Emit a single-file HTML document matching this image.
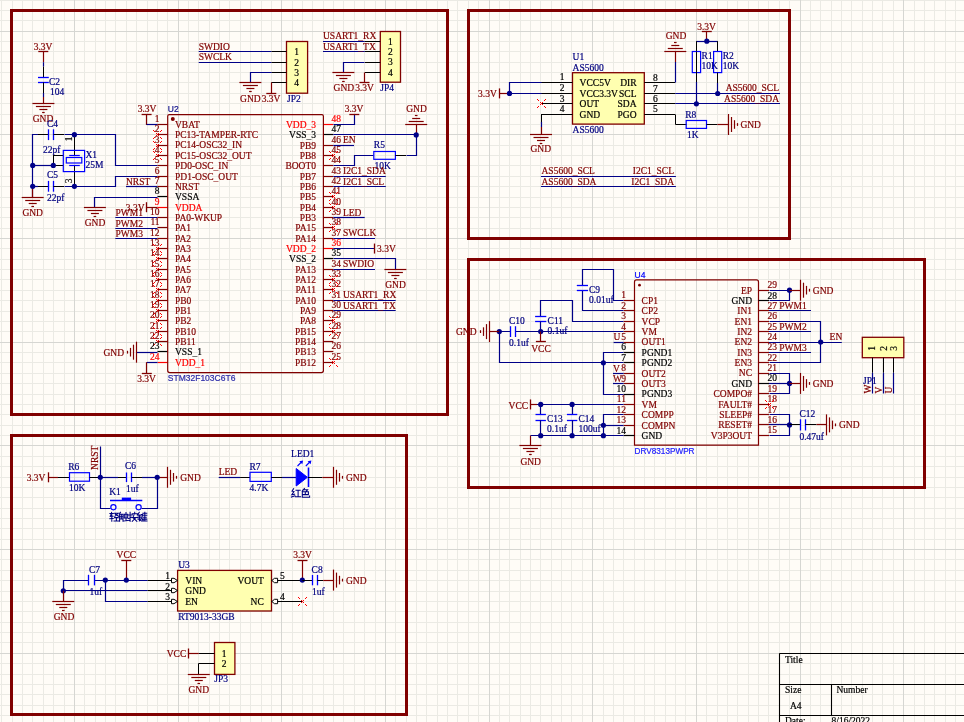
<!DOCTYPE html>
<html><head><meta charset="utf-8"><style>html,body{margin:0;padding:0;background:#fffcf7;overflow:hidden}svg{display:block;will-change:transform}text{white-space:pre}</style></head>
<body><svg width="964" height="722" viewBox="0 0 964 722">
<rect x="0" y="0" width="964" height="722" fill="#fffcf7"/>
<path d="M1.5,0V722M12.5,0V722M22.5,0V722M32.5,0V722M43.5,0V722M53.5,0V722M64.5,0V722M84.5,0V722M95.5,0V722M105.5,0V722M115.5,0V722M126.5,0V722M136.5,0V722M147.5,0V722M157.5,0V722M167.5,0V722M188.5,0V722M198.5,0V722M209.5,0V722M219.5,0V722M229.5,0V722M240.5,0V722M250.5,0V722M261.5,0V722M271.5,0V722M292.5,0V722M302.5,0V722M312.5,0V722M323.5,0V722M333.5,0V722M343.5,0V722M354.5,0V722M364.5,0V722M375.5,0V722M395.5,0V722M406.5,0V722M416.5,0V722M426.5,0V722M437.5,0V722M447.5,0V722M457.5,0V722M468.5,0V722M478.5,0V722M499.5,0V722M509.5,0V722M520.5,0V722M530.5,0V722M540.5,0V722M551.5,0V722M561.5,0V722M571.5,0V722M582.5,0V722M603.5,0V722M613.5,0V722M623.5,0V722M634.5,0V722M644.5,0V722M654.5,0V722M665.5,0V722M675.5,0V722M685.5,0V722M706.5,0V722M717.5,0V722M727.5,0V722M737.5,0V722M748.5,0V722M758.5,0V722M768.5,0V722M779.5,0V722M789.5,0V722M810.5,0V722M820.5,0V722M831.5,0V722M841.5,0V722M851.5,0V722M862.5,0V722M872.5,0V722M882.5,0V722M893.5,0V722M914.5,0V722M924.5,0V722M934.5,0V722M945.5,0V722M955.5,0V722M0,0.5H964M0,10.5H964M0,20.5H964M0,41.5H964M0,51.5H964M0,62.5H964M0,72.5H964M0,82.5H964M0,93.5H964M0,103.5H964M0,114.5H964M0,124.5H964M0,145.5H964M0,155.5H964M0,165.5H964M0,176.5H964M0,186.5H964M0,197.5H964M0,207.5H964M0,217.5H964M0,228.5H964M0,248.5H964M0,259.5H964M0,269.5H964M0,279.5H964M0,290.5H964M0,300.5H964M0,311.5H964M0,321.5H964M0,331.5H964M0,352.5H964M0,362.5H964M0,373.5H964M0,383.5H964M0,394.5H964M0,404.5H964M0,414.5H964M0,425.5H964M0,435.5H964M0,456.5H964M0,466.5H964M0,477.5H964M0,487.5H964M0,497.5H964M0,508.5H964M0,518.5H964M0,528.5H964M0,539.5H964M0,559.5H964M0,570.5H964M0,580.5H964M0,591.5H964M0,601.5H964M0,611.5H964M0,622.5H964M0,632.5H964M0,642.5H964M0,663.5H964M0,674.5H964M0,684.5H964M0,694.5H964M0,705.5H964M0,715.5H964" stroke="#ebeae4" stroke-width="1" fill="none"/>
<path d="M74.5,0V722M178.5,0V722M281.5,0V722M385.5,0V722M489.5,0V722M592.5,0V722M696.5,0V722M800.5,0V722M903.5,0V722M0,31.5H964M0,134.5H964M0,238.5H964M0,342.5H964M0,445.5H964M0,549.5H964M0,653.5H964" stroke="#d6d6d2" stroke-width="1" fill="none"/>
<rect x="11.5" y="10.5" width="436.0" height="404.0" fill="none" stroke="#800000" stroke-width="3"/>
<rect x="468.5" y="10.5" width="321.0" height="228.0" fill="none" stroke="#800000" stroke-width="3"/>
<rect x="11.5" y="435.5" width="395.0" height="279.0" fill="none" stroke="#800000" stroke-width="3"/>
<rect x="468.5" y="259.5" width="456.0" height="228.0" fill="none" stroke="#800000" stroke-width="3"/>
<line x1="38.3" y1="51.5" x2="48.3" y2="51.5" stroke="#800000" stroke-width="1.3"/>
<text x="43" y="50.2" fill="#800000" font-family="'Liberation Serif'" font-size="9.5" text-anchor="middle" stroke="#800000" stroke-width="0.2">3.3V</text>
<line x1="43.5" y1="51.8" x2="43.5" y2="62.2" stroke="#800000" stroke-width="1.2"/>
<line x1="43.5" y1="62.2" x2="43.5" y2="66.6" stroke="#000088" stroke-width="1.2"/>
<line x1="43.5" y1="66.6" x2="43.5" y2="77.3" stroke="#000000" stroke-width="1"/>
<line x1="38" y1="77.5" x2="48.8" y2="77.5" stroke="#0000ff" stroke-width="1.3"/>
<line x1="38" y1="82.5" x2="48.8" y2="82.5" stroke="#0000ff" stroke-width="1.3"/>
<line x1="43.5" y1="82.4" x2="43.5" y2="93" stroke="#000000" stroke-width="1"/>
<line x1="43.5" y1="93" x2="43.5" y2="97" stroke="#000088" stroke-width="1.2"/>
<line x1="43.5" y1="97" x2="43.5" y2="103.5" stroke="#800000" stroke-width="1.2"/>
<text x="49" y="84.8" fill="#000080" font-family="'Liberation Serif'" font-size="9.5" text-anchor="start" stroke="#000080" stroke-width="0.2">C2</text>
<text x="50" y="94.6" fill="#000080" font-family="'Liberation Serif'" font-size="9.5" text-anchor="start" stroke="#000080" stroke-width="0.2">104</text>
<line x1="32.4" y1="103.5" x2="54.4" y2="103.5" stroke="#800000" stroke-width="1.2"/>
<line x1="35.9" y1="106.5" x2="50.9" y2="106.5" stroke="#800000" stroke-width="1.2"/>
<line x1="39.4" y1="109.5" x2="47.4" y2="109.5" stroke="#800000" stroke-width="1.2"/>
<line x1="42.1" y1="112.5" x2="44.7" y2="112.5" stroke="#800000" stroke-width="1.2"/>
<text x="43" y="122" fill="#800000" font-family="'Liberation Serif'" font-size="9.5" text-anchor="middle" stroke="#800000" stroke-width="0.2">GND</text>
<polyline points="32.5,197.5 32.5,134.5 38.5,134.5" fill="none" stroke="#000088" stroke-width="1.2" stroke-linejoin="miter"/>
<line x1="38" y1="134.5" x2="48.5" y2="134.5" stroke="#000000" stroke-width="1"/>
<line x1="48.5" y1="129.3" x2="48.5" y2="140.1" stroke="#0000ff" stroke-width="1.3"/>
<line x1="53.5" y1="129.3" x2="53.5" y2="140.1" stroke="#0000ff" stroke-width="1.3"/>
<line x1="53.5" y1="134.5" x2="64" y2="134.5" stroke="#000000" stroke-width="1"/>
<polyline points="64.5,134.5 115.5,134.5 115.5,165.5 157.5,165.5" fill="none" stroke="#000088" stroke-width="1.2" stroke-linejoin="miter"/>
<text x="47" y="126.5" fill="#000080" font-family="'Liberation Serif'" font-size="9.5" text-anchor="start" stroke="#000080" stroke-width="0.2">C4</text>
<text x="43" y="153" fill="#000080" font-family="'Liberation Serif'" font-size="9.5" text-anchor="start" stroke="#000080" stroke-width="0.2">22pf</text>
<line x1="32.7" y1="186.5" x2="38" y2="186.5" stroke="#000088" stroke-width="1.2"/>
<line x1="38" y1="186.5" x2="48.6" y2="186.5" stroke="#000000" stroke-width="1"/>
<line x1="48.5" y1="180.9" x2="48.5" y2="191.7" stroke="#0000ff" stroke-width="1.3"/>
<line x1="53.5" y1="180.9" x2="53.5" y2="191.7" stroke="#0000ff" stroke-width="1.3"/>
<line x1="53.4" y1="186.5" x2="64" y2="186.5" stroke="#000000" stroke-width="1"/>
<polyline points="64.5,186.5 115.5,186.5 115.5,176.5 157.5,176.5" fill="none" stroke="#000088" stroke-width="1.2" stroke-linejoin="miter"/>
<text x="47" y="177.7" fill="#000080" font-family="'Liberation Serif'" font-size="9.5" text-anchor="start" stroke="#000080" stroke-width="0.2">C5</text>
<text x="47" y="201" fill="#000080" font-family="'Liberation Serif'" font-size="9.5" text-anchor="start" stroke="#000080" stroke-width="0.2">22pf</text>
<line x1="32.5" y1="186.3" x2="32.5" y2="197.5" stroke="#800000" stroke-width="1.2"/>
<line x1="21.7" y1="197.5" x2="43.7" y2="197.5" stroke="#800000" stroke-width="1.2"/>
<line x1="25.2" y1="200.5" x2="40.2" y2="200.5" stroke="#800000" stroke-width="1.2"/>
<line x1="28.7" y1="203.5" x2="36.7" y2="203.5" stroke="#800000" stroke-width="1.2"/>
<line x1="31.4" y1="206.5" x2="34" y2="206.5" stroke="#800000" stroke-width="1.2"/>
<text x="32.7" y="215.5" fill="#800000" font-family="'Liberation Serif'" font-size="9.5" text-anchor="middle" stroke="#800000" stroke-width="0.2">GND</text>
<line x1="32.7" y1="165.5" x2="53.3" y2="165.5" stroke="#000088" stroke-width="1.2"/>
<line x1="53.3" y1="165.5" x2="63.3" y2="165.5" stroke="#000000" stroke-width="1"/>
<line x1="53.5" y1="165.4" x2="53.5" y2="155" stroke="#000000" stroke-width="1"/>
<line x1="53.3" y1="155.5" x2="63.3" y2="155.5" stroke="#000000" stroke-width="1"/>
<line x1="74.5" y1="134.7" x2="74.5" y2="155" stroke="#000000" stroke-width="1"/>
<line x1="74.5" y1="165.3" x2="74.5" y2="186.3" stroke="#000000" stroke-width="1"/>
<rect x="63.3" y="150.4" width="21.3" height="21.2" stroke="#0000ff" stroke-width="1.2" fill="none" rx="0"/>
<rect x="66.3" y="157.5" width="15.5" height="5.5" stroke="#0000ff" stroke-width="1.2" fill="none" rx="0"/>
<line x1="69.2" y1="155.5" x2="79.8" y2="155.5" stroke="#0000ff" stroke-width="1.2"/>
<line x1="69.2" y1="165.5" x2="79.8" y2="165.5" stroke="#0000ff" stroke-width="1.2"/>
<text x="72.5" y="141.3" fill="#000000" font-family="'Liberation Serif'" font-size="9.5" text-anchor="start" stroke="#000000" stroke-width="0.2" transform="rotate(-90 72.5 141.3)">1</text>
<text x="72.5" y="183.3" fill="#000000" font-family="'Liberation Serif'" font-size="9.5" text-anchor="start" stroke="#000000" stroke-width="0.2" transform="rotate(-90 72.5 183.3)">3</text>
<text x="85.4" y="157.8" fill="#000080" font-family="'Liberation Serif'" font-size="9.5" text-anchor="start" stroke="#000080" stroke-width="0.2">X1</text>
<text x="85.4" y="167.8" fill="#000080" font-family="'Liberation Serif'" font-size="9.5" text-anchor="start" stroke="#000080" stroke-width="0.2">25M</text>
<circle cx="74.4" cy="134.7" r="2.6" fill="#000088"/>
<circle cx="32.7" cy="165.4" r="2.6" fill="#000088"/>
<circle cx="53.3" cy="165.4" r="2.6" fill="#000088"/>
<circle cx="32.7" cy="186.3" r="2.6" fill="#000088"/>
<circle cx="74.4" cy="186.3" r="2.6" fill="#000088"/>
<line x1="126" y1="186.5" x2="157.5" y2="186.5" stroke="#000088" stroke-width="1.2"/>
<text x="126" y="184.8" fill="#800000" font-family="'Liberation Serif'" font-size="9.5" text-anchor="start" stroke="#800000" stroke-width="0.2">NRST</text>
<polyline points="157.5,197.5 94.5,197.5 94.5,207.5" fill="none" stroke="#000088" stroke-width="1.2" stroke-linejoin="miter"/>
<line x1="83.9" y1="207.5" x2="105.9" y2="207.5" stroke="#800000" stroke-width="1.2"/>
<line x1="87.4" y1="210.5" x2="102.4" y2="210.5" stroke="#800000" stroke-width="1.2"/>
<line x1="90.9" y1="213.5" x2="98.9" y2="213.5" stroke="#800000" stroke-width="1.2"/>
<line x1="93.6" y1="216.5" x2="96.2" y2="216.5" stroke="#800000" stroke-width="1.2"/>
<text x="95" y="225.5" fill="#800000" font-family="'Liberation Serif'" font-size="9.5" text-anchor="middle" stroke="#800000" stroke-width="0.2">GND</text>
<line x1="146.7" y1="207.5" x2="157.5" y2="207.5" stroke="#800000" stroke-width="1.2"/>
<line x1="146.5" y1="202.2" x2="146.5" y2="212.2" stroke="#800000" stroke-width="1.3"/>
<text x="144.5" y="210.5" fill="#800000" font-family="'Liberation Serif'" font-size="9.5" text-anchor="end" stroke="#800000" stroke-width="0.2">3.3V</text>
<line x1="115.3" y1="217.5" x2="157.5" y2="217.5" stroke="#000088" stroke-width="1.2"/>
<text x="115.5" y="216.1" fill="#800000" font-family="'Liberation Serif'" font-size="9.5" text-anchor="start" stroke="#800000" stroke-width="0.2">PWM1</text>
<line x1="115.3" y1="228.5" x2="157.5" y2="228.5" stroke="#000088" stroke-width="1.2"/>
<text x="115.5" y="226.8" fill="#800000" font-family="'Liberation Serif'" font-size="9.5" text-anchor="start" stroke="#800000" stroke-width="0.2">PWM2</text>
<line x1="115.3" y1="238.5" x2="157.5" y2="238.5" stroke="#000088" stroke-width="1.2"/>
<text x="115.5" y="237.1" fill="#800000" font-family="'Liberation Serif'" font-size="9.5" text-anchor="start" stroke="#800000" stroke-width="0.2">PWM3</text>
<line x1="141.6" y1="114.5" x2="151.6" y2="114.5" stroke="#800000" stroke-width="1.3"/>
<text x="147" y="111.8" fill="#800000" font-family="'Liberation Serif'" font-size="9.5" text-anchor="middle" stroke="#800000" stroke-width="0.2">3.3V</text>
<polyline points="146.5,114.5 146.5,124.5 157.5,124.5" fill="none" stroke="#800000" stroke-width="1.2" stroke-linejoin="miter"/>
<line x1="146.6" y1="124.5" x2="157.5" y2="124.5" stroke="#000088" stroke-width="1.2"/>
<line x1="157.5" y1="124.5" x2="167.7" y2="124.5" stroke="#800000" stroke-width="1.2"/>
<text x="175" y="127.8" fill="#800000" font-family="'Liberation Serif'" font-size="9.5" text-anchor="start" stroke="#800000" stroke-width="0.2">VBAT</text>
<text x="159.6" y="121.9" fill="#800000" font-family="'Liberation Serif'" font-size="9.5" text-anchor="end" stroke="#800000" stroke-width="0.2">1</text>
<line x1="157.5" y1="134.5" x2="167.7" y2="134.5" stroke="#800000" stroke-width="1.2"/>
<text x="175" y="138.14" fill="#800000" font-family="'Liberation Serif'" font-size="9.5" text-anchor="start" stroke="#800000" stroke-width="0.2">PC13-TAMPER-RTC</text>
<text x="159.6" y="132.24" fill="#800000" font-family="'Liberation Serif'" font-size="9.5" text-anchor="end" stroke="#800000" stroke-width="0.2">2</text>
<path d="M153,130h1v1h-1zM154,131h1v1h-1zM161,130h1v1h-1zM160,131h1v1h-1zM153,138h1v1h-1zM154,137h1v1h-1zM161,138h1v1h-1zM160,137h1v1h-1zM156,133h1v1h-1zM157,134h1v1h-1zM158,135h1v1h-1zM156,135h1v1h-1zM158,133h1v1h-1z" fill="#ff0000" shape-rendering="crispEdges"/>
<line x1="157.5" y1="145.5" x2="167.7" y2="145.5" stroke="#800000" stroke-width="1.2"/>
<text x="175" y="148.49" fill="#800000" font-family="'Liberation Serif'" font-size="9.5" text-anchor="start" stroke="#800000" stroke-width="0.2">PC14-OSC32_IN</text>
<text x="159.6" y="142.59" fill="#800000" font-family="'Liberation Serif'" font-size="9.5" text-anchor="end" stroke="#800000" stroke-width="0.2">3</text>
<path d="M153,141h1v1h-1zM154,142h1v1h-1zM161,141h1v1h-1zM160,142h1v1h-1zM153,149h1v1h-1zM154,148h1v1h-1zM161,149h1v1h-1zM160,148h1v1h-1zM156,144h1v1h-1zM157,145h1v1h-1zM158,146h1v1h-1zM156,146h1v1h-1zM158,144h1v1h-1z" fill="#ff0000" shape-rendering="crispEdges"/>
<line x1="157.5" y1="155.5" x2="167.7" y2="155.5" stroke="#800000" stroke-width="1.2"/>
<text x="175" y="158.83" fill="#800000" font-family="'Liberation Serif'" font-size="9.5" text-anchor="start" stroke="#800000" stroke-width="0.2">PC15-OSC32_OUT</text>
<text x="159.6" y="152.93" fill="#800000" font-family="'Liberation Serif'" font-size="9.5" text-anchor="end" stroke="#800000" stroke-width="0.2">4</text>
<path d="M153,151h1v1h-1zM154,152h1v1h-1zM161,151h1v1h-1zM160,152h1v1h-1zM153,159h1v1h-1zM154,158h1v1h-1zM161,159h1v1h-1zM160,158h1v1h-1zM156,154h1v1h-1zM157,155h1v1h-1zM158,156h1v1h-1zM156,156h1v1h-1zM158,154h1v1h-1z" fill="#ff0000" shape-rendering="crispEdges"/>
<line x1="157.5" y1="165.5" x2="167.7" y2="165.5" stroke="#800000" stroke-width="1.2"/>
<text x="175" y="169.17" fill="#800000" font-family="'Liberation Serif'" font-size="9.5" text-anchor="start" stroke="#800000" stroke-width="0.2">PD0-OSC_IN</text>
<text x="159.6" y="163.27" fill="#800000" font-family="'Liberation Serif'" font-size="9.5" text-anchor="end" stroke="#800000" stroke-width="0.2">5</text>
<line x1="157.5" y1="176.5" x2="167.7" y2="176.5" stroke="#800000" stroke-width="1.2"/>
<text x="175" y="179.52" fill="#800000" font-family="'Liberation Serif'" font-size="9.5" text-anchor="start" stroke="#800000" stroke-width="0.2">PD1-OSC_OUT</text>
<text x="159.6" y="173.62" fill="#800000" font-family="'Liberation Serif'" font-size="9.5" text-anchor="end" stroke="#800000" stroke-width="0.2">6</text>
<line x1="157.5" y1="186.5" x2="167.7" y2="186.5" stroke="#800000" stroke-width="1.2"/>
<text x="175" y="189.86" fill="#800000" font-family="'Liberation Serif'" font-size="9.5" text-anchor="start" stroke="#800000" stroke-width="0.2">NRST</text>
<text x="159.6" y="183.96" fill="#800000" font-family="'Liberation Serif'" font-size="9.5" text-anchor="end" stroke="#800000" stroke-width="0.2">7</text>
<line x1="157.5" y1="196.5" x2="167.7" y2="196.5" stroke="#000000" stroke-width="1.2"/>
<text x="175" y="200.2" fill="#000000" font-family="'Liberation Serif'" font-size="9.5" text-anchor="start" stroke="#000000" stroke-width="0.2">VSSA</text>
<text x="159.6" y="194.3" fill="#000000" font-family="'Liberation Serif'" font-size="9.5" text-anchor="end" stroke="#000000" stroke-width="0.2">8</text>
<line x1="157.5" y1="207.5" x2="167.7" y2="207.5" stroke="#ff0000" stroke-width="1.2"/>
<text x="175" y="210.54" fill="#ff0000" font-family="'Liberation Serif'" font-size="9.5" text-anchor="start" stroke="#ff0000" stroke-width="0.2">VDDA</text>
<text x="159.6" y="204.64" fill="#ff0000" font-family="'Liberation Serif'" font-size="9.5" text-anchor="end" stroke="#ff0000" stroke-width="0.2">9</text>
<line x1="157.5" y1="217.5" x2="167.7" y2="217.5" stroke="#800000" stroke-width="1.2"/>
<text x="175" y="220.89" fill="#800000" font-family="'Liberation Serif'" font-size="9.5" text-anchor="start" stroke="#800000" stroke-width="0.2">PA0-WKUP</text>
<text x="159.6" y="214.99" fill="#800000" font-family="'Liberation Serif'" font-size="9.5" text-anchor="end" stroke="#800000" stroke-width="0.2">10</text>
<line x1="157.5" y1="227.5" x2="167.7" y2="227.5" stroke="#800000" stroke-width="1.2"/>
<text x="175" y="231.23" fill="#800000" font-family="'Liberation Serif'" font-size="9.5" text-anchor="start" stroke="#800000" stroke-width="0.2">PA1</text>
<text x="159.6" y="225.33" fill="#800000" font-family="'Liberation Serif'" font-size="9.5" text-anchor="end" stroke="#800000" stroke-width="0.2">11</text>
<line x1="157.5" y1="238.5" x2="167.7" y2="238.5" stroke="#800000" stroke-width="1.2"/>
<text x="175" y="241.57" fill="#800000" font-family="'Liberation Serif'" font-size="9.5" text-anchor="start" stroke="#800000" stroke-width="0.2">PA2</text>
<text x="159.6" y="235.67" fill="#800000" font-family="'Liberation Serif'" font-size="9.5" text-anchor="end" stroke="#800000" stroke-width="0.2">12</text>
<line x1="157.5" y1="248.5" x2="167.7" y2="248.5" stroke="#800000" stroke-width="1.2"/>
<text x="175" y="251.92" fill="#800000" font-family="'Liberation Serif'" font-size="9.5" text-anchor="start" stroke="#800000" stroke-width="0.2">PA3</text>
<text x="159.6" y="246.02" fill="#800000" font-family="'Liberation Serif'" font-size="9.5" text-anchor="end" stroke="#800000" stroke-width="0.2">13</text>
<path d="M153,244h1v1h-1zM154,245h1v1h-1zM161,244h1v1h-1zM160,245h1v1h-1zM153,252h1v1h-1zM154,251h1v1h-1zM161,252h1v1h-1zM160,251h1v1h-1zM156,247h1v1h-1zM157,248h1v1h-1zM158,249h1v1h-1zM156,249h1v1h-1zM158,247h1v1h-1z" fill="#ff0000" shape-rendering="crispEdges"/>
<line x1="157.5" y1="258.5" x2="167.7" y2="258.5" stroke="#800000" stroke-width="1.2"/>
<text x="175" y="262.26" fill="#800000" font-family="'Liberation Serif'" font-size="9.5" text-anchor="start" stroke="#800000" stroke-width="0.2">PA4</text>
<text x="159.6" y="256.36" fill="#800000" font-family="'Liberation Serif'" font-size="9.5" text-anchor="end" stroke="#800000" stroke-width="0.2">14</text>
<path d="M153,254h1v1h-1zM154,255h1v1h-1zM161,254h1v1h-1zM160,255h1v1h-1zM153,262h1v1h-1zM154,261h1v1h-1zM161,262h1v1h-1zM160,261h1v1h-1zM156,257h1v1h-1zM157,258h1v1h-1zM158,259h1v1h-1zM156,259h1v1h-1zM158,257h1v1h-1z" fill="#ff0000" shape-rendering="crispEdges"/>
<line x1="157.5" y1="269.5" x2="167.7" y2="269.5" stroke="#800000" stroke-width="1.2"/>
<text x="175" y="272.6" fill="#800000" font-family="'Liberation Serif'" font-size="9.5" text-anchor="start" stroke="#800000" stroke-width="0.2">PA5</text>
<text x="159.6" y="266.7" fill="#800000" font-family="'Liberation Serif'" font-size="9.5" text-anchor="end" stroke="#800000" stroke-width="0.2">15</text>
<path d="M153,265h1v1h-1zM154,266h1v1h-1zM161,265h1v1h-1zM160,266h1v1h-1zM153,273h1v1h-1zM154,272h1v1h-1zM161,273h1v1h-1zM160,272h1v1h-1zM156,268h1v1h-1zM157,269h1v1h-1zM158,270h1v1h-1zM156,270h1v1h-1zM158,268h1v1h-1z" fill="#ff0000" shape-rendering="crispEdges"/>
<line x1="157.5" y1="279.5" x2="167.7" y2="279.5" stroke="#800000" stroke-width="1.2"/>
<text x="175" y="282.94" fill="#800000" font-family="'Liberation Serif'" font-size="9.5" text-anchor="start" stroke="#800000" stroke-width="0.2">PA6</text>
<text x="159.6" y="277.05" fill="#800000" font-family="'Liberation Serif'" font-size="9.5" text-anchor="end" stroke="#800000" stroke-width="0.2">16</text>
<path d="M153,275h1v1h-1zM154,276h1v1h-1zM161,275h1v1h-1zM160,276h1v1h-1zM153,283h1v1h-1zM154,282h1v1h-1zM161,283h1v1h-1zM160,282h1v1h-1zM156,278h1v1h-1zM157,279h1v1h-1zM158,280h1v1h-1zM156,280h1v1h-1zM158,278h1v1h-1z" fill="#ff0000" shape-rendering="crispEdges"/>
<line x1="157.5" y1="289.5" x2="167.7" y2="289.5" stroke="#800000" stroke-width="1.2"/>
<text x="175" y="293.29" fill="#800000" font-family="'Liberation Serif'" font-size="9.5" text-anchor="start" stroke="#800000" stroke-width="0.2">PA7</text>
<text x="159.6" y="287.39" fill="#800000" font-family="'Liberation Serif'" font-size="9.5" text-anchor="end" stroke="#800000" stroke-width="0.2">17</text>
<path d="M153,285h1v1h-1zM154,286h1v1h-1zM161,285h1v1h-1zM160,286h1v1h-1zM153,293h1v1h-1zM154,292h1v1h-1zM161,293h1v1h-1zM160,292h1v1h-1zM156,288h1v1h-1zM157,289h1v1h-1zM158,290h1v1h-1zM156,290h1v1h-1zM158,288h1v1h-1z" fill="#ff0000" shape-rendering="crispEdges"/>
<line x1="157.5" y1="300.5" x2="167.7" y2="300.5" stroke="#800000" stroke-width="1.2"/>
<text x="175" y="303.63" fill="#800000" font-family="'Liberation Serif'" font-size="9.5" text-anchor="start" stroke="#800000" stroke-width="0.2">PB0</text>
<text x="159.6" y="297.73" fill="#800000" font-family="'Liberation Serif'" font-size="9.5" text-anchor="end" stroke="#800000" stroke-width="0.2">18</text>
<path d="M153,296h1v1h-1zM154,297h1v1h-1zM161,296h1v1h-1zM160,297h1v1h-1zM153,304h1v1h-1zM154,303h1v1h-1zM161,304h1v1h-1zM160,303h1v1h-1zM156,299h1v1h-1zM157,300h1v1h-1zM158,301h1v1h-1zM156,301h1v1h-1zM158,299h1v1h-1z" fill="#ff0000" shape-rendering="crispEdges"/>
<line x1="157.5" y1="310.5" x2="167.7" y2="310.5" stroke="#800000" stroke-width="1.2"/>
<text x="175" y="313.97" fill="#800000" font-family="'Liberation Serif'" font-size="9.5" text-anchor="start" stroke="#800000" stroke-width="0.2">PB1</text>
<text x="159.6" y="308.07" fill="#800000" font-family="'Liberation Serif'" font-size="9.5" text-anchor="end" stroke="#800000" stroke-width="0.2">19</text>
<path d="M153,306h1v1h-1zM154,307h1v1h-1zM161,306h1v1h-1zM160,307h1v1h-1zM153,314h1v1h-1zM154,313h1v1h-1zM161,314h1v1h-1zM160,313h1v1h-1zM156,309h1v1h-1zM157,310h1v1h-1zM158,311h1v1h-1zM156,311h1v1h-1zM158,309h1v1h-1z" fill="#ff0000" shape-rendering="crispEdges"/>
<line x1="157.5" y1="320.5" x2="167.7" y2="320.5" stroke="#800000" stroke-width="1.2"/>
<text x="175" y="324.32" fill="#800000" font-family="'Liberation Serif'" font-size="9.5" text-anchor="start" stroke="#800000" stroke-width="0.2">PB2</text>
<text x="159.6" y="318.42" fill="#800000" font-family="'Liberation Serif'" font-size="9.5" text-anchor="end" stroke="#800000" stroke-width="0.2">20</text>
<path d="M153,316h1v1h-1zM154,317h1v1h-1zM161,316h1v1h-1zM160,317h1v1h-1zM153,324h1v1h-1zM154,323h1v1h-1zM161,324h1v1h-1zM160,323h1v1h-1zM156,319h1v1h-1zM157,320h1v1h-1zM158,321h1v1h-1zM156,321h1v1h-1zM158,319h1v1h-1z" fill="#ff0000" shape-rendering="crispEdges"/>
<line x1="157.5" y1="331.5" x2="167.7" y2="331.5" stroke="#800000" stroke-width="1.2"/>
<text x="175" y="334.66" fill="#800000" font-family="'Liberation Serif'" font-size="9.5" text-anchor="start" stroke="#800000" stroke-width="0.2">PB10</text>
<text x="159.6" y="328.76" fill="#800000" font-family="'Liberation Serif'" font-size="9.5" text-anchor="end" stroke="#800000" stroke-width="0.2">21</text>
<path d="M153,327h1v1h-1zM154,328h1v1h-1zM161,327h1v1h-1zM160,328h1v1h-1zM153,335h1v1h-1zM154,334h1v1h-1zM161,335h1v1h-1zM160,334h1v1h-1zM156,330h1v1h-1zM157,331h1v1h-1zM158,332h1v1h-1zM156,332h1v1h-1zM158,330h1v1h-1z" fill="#ff0000" shape-rendering="crispEdges"/>
<line x1="157.5" y1="341.5" x2="167.7" y2="341.5" stroke="#800000" stroke-width="1.2"/>
<text x="175" y="345" fill="#800000" font-family="'Liberation Serif'" font-size="9.5" text-anchor="start" stroke="#800000" stroke-width="0.2">PB11</text>
<text x="159.6" y="339.1" fill="#800000" font-family="'Liberation Serif'" font-size="9.5" text-anchor="end" stroke="#800000" stroke-width="0.2">22</text>
<path d="M153,337h1v1h-1zM154,338h1v1h-1zM161,337h1v1h-1zM160,338h1v1h-1zM153,345h1v1h-1zM154,344h1v1h-1zM161,345h1v1h-1zM160,344h1v1h-1zM156,340h1v1h-1zM157,341h1v1h-1zM158,342h1v1h-1zM156,342h1v1h-1zM158,340h1v1h-1z" fill="#ff0000" shape-rendering="crispEdges"/>
<line x1="157.5" y1="351.5" x2="167.7" y2="351.5" stroke="#000000" stroke-width="1.2"/>
<text x="175" y="355.35" fill="#000000" font-family="'Liberation Serif'" font-size="9.5" text-anchor="start" stroke="#000000" stroke-width="0.2">VSS_1</text>
<text x="159.6" y="349.45" fill="#000000" font-family="'Liberation Serif'" font-size="9.5" text-anchor="end" stroke="#000000" stroke-width="0.2">23</text>
<line x1="157.5" y1="362.5" x2="167.7" y2="362.5" stroke="#ff0000" stroke-width="1.2"/>
<text x="175" y="365.69" fill="#ff0000" font-family="'Liberation Serif'" font-size="9.5" text-anchor="start" stroke="#ff0000" stroke-width="0.2">VDD_1</text>
<text x="159.6" y="359.79" fill="#ff0000" font-family="'Liberation Serif'" font-size="9.5" text-anchor="end" stroke="#ff0000" stroke-width="0.2">24</text>
<line x1="323.4" y1="124.5" x2="333.3" y2="124.5" stroke="#ff0000" stroke-width="1.2"/>
<text x="316" y="128" fill="#ff0000" font-family="'Liberation Serif'" font-size="9.5" text-anchor="end" stroke="#ff0000" stroke-width="0.2">VDD_3</text>
<text x="331.5" y="122.1" fill="#ff0000" font-family="'Liberation Serif'" font-size="9.5" text-anchor="start" stroke="#ff0000" stroke-width="0.2">48</text>
<line x1="323.4" y1="134.5" x2="333.3" y2="134.5" stroke="#000000" stroke-width="1.2"/>
<text x="316" y="138.33" fill="#000000" font-family="'Liberation Serif'" font-size="9.5" text-anchor="end" stroke="#000000" stroke-width="0.2">VSS_3</text>
<text x="331.5" y="132.43" fill="#000000" font-family="'Liberation Serif'" font-size="9.5" text-anchor="start" stroke="#000000" stroke-width="0.2">47</text>
<line x1="323.4" y1="145.5" x2="333.3" y2="145.5" stroke="#800000" stroke-width="1.2"/>
<text x="316" y="148.66" fill="#800000" font-family="'Liberation Serif'" font-size="9.5" text-anchor="end" stroke="#800000" stroke-width="0.2">PB9</text>
<text x="331.5" y="142.76" fill="#800000" font-family="'Liberation Serif'" font-size="9.5" text-anchor="start" stroke="#800000" stroke-width="0.2">46</text>
<line x1="323.4" y1="155.5" x2="333.3" y2="155.5" stroke="#800000" stroke-width="1.2"/>
<text x="316" y="158.99" fill="#800000" font-family="'Liberation Serif'" font-size="9.5" text-anchor="end" stroke="#800000" stroke-width="0.2">PB8</text>
<text x="331.5" y="153.09" fill="#800000" font-family="'Liberation Serif'" font-size="9.5" text-anchor="start" stroke="#800000" stroke-width="0.2">45</text>
<path d="M329,151h1v1h-1zM330,152h1v1h-1zM337,151h1v1h-1zM336,152h1v1h-1zM329,159h1v1h-1zM330,158h1v1h-1zM337,159h1v1h-1zM336,158h1v1h-1zM332,154h1v1h-1zM333,155h1v1h-1zM334,156h1v1h-1zM332,156h1v1h-1zM334,154h1v1h-1z" fill="#ff0000" shape-rendering="crispEdges"/>
<line x1="323.4" y1="165.5" x2="333.3" y2="165.5" stroke="#800000" stroke-width="1.2"/>
<text x="316" y="169.32" fill="#800000" font-family="'Liberation Serif'" font-size="9.5" text-anchor="end" stroke="#800000" stroke-width="0.2">BOOT0</text>
<text x="331.5" y="163.42" fill="#800000" font-family="'Liberation Serif'" font-size="9.5" text-anchor="start" stroke="#800000" stroke-width="0.2">44</text>
<line x1="323.4" y1="176.5" x2="333.3" y2="176.5" stroke="#800000" stroke-width="1.2"/>
<text x="316" y="179.65" fill="#800000" font-family="'Liberation Serif'" font-size="9.5" text-anchor="end" stroke="#800000" stroke-width="0.2">PB7</text>
<text x="331.5" y="173.75" fill="#800000" font-family="'Liberation Serif'" font-size="9.5" text-anchor="start" stroke="#800000" stroke-width="0.2">43</text>
<line x1="323.4" y1="186.5" x2="333.3" y2="186.5" stroke="#800000" stroke-width="1.2"/>
<text x="316" y="189.98" fill="#800000" font-family="'Liberation Serif'" font-size="9.5" text-anchor="end" stroke="#800000" stroke-width="0.2">PB6</text>
<text x="331.5" y="184.08" fill="#800000" font-family="'Liberation Serif'" font-size="9.5" text-anchor="start" stroke="#800000" stroke-width="0.2">42</text>
<line x1="323.4" y1="196.5" x2="333.3" y2="196.5" stroke="#800000" stroke-width="1.2"/>
<text x="316" y="200.31" fill="#800000" font-family="'Liberation Serif'" font-size="9.5" text-anchor="end" stroke="#800000" stroke-width="0.2">PB5</text>
<text x="331.5" y="194.41" fill="#800000" font-family="'Liberation Serif'" font-size="9.5" text-anchor="start" stroke="#800000" stroke-width="0.2">41</text>
<path d="M329,192h1v1h-1zM330,193h1v1h-1zM337,192h1v1h-1zM336,193h1v1h-1zM329,200h1v1h-1zM330,199h1v1h-1zM337,200h1v1h-1zM336,199h1v1h-1zM332,195h1v1h-1zM333,196h1v1h-1zM334,197h1v1h-1zM332,197h1v1h-1zM334,195h1v1h-1z" fill="#ff0000" shape-rendering="crispEdges"/>
<line x1="323.4" y1="207.5" x2="333.3" y2="207.5" stroke="#800000" stroke-width="1.2"/>
<text x="316" y="210.64" fill="#800000" font-family="'Liberation Serif'" font-size="9.5" text-anchor="end" stroke="#800000" stroke-width="0.2">PB4</text>
<text x="331.5" y="204.74" fill="#800000" font-family="'Liberation Serif'" font-size="9.5" text-anchor="start" stroke="#800000" stroke-width="0.2">40</text>
<path d="M329,203h1v1h-1zM330,204h1v1h-1zM337,203h1v1h-1zM336,204h1v1h-1zM329,211h1v1h-1zM330,210h1v1h-1zM337,211h1v1h-1zM336,210h1v1h-1zM332,206h1v1h-1zM333,207h1v1h-1zM334,208h1v1h-1zM332,208h1v1h-1zM334,206h1v1h-1z" fill="#ff0000" shape-rendering="crispEdges"/>
<line x1="323.4" y1="217.5" x2="333.3" y2="217.5" stroke="#800000" stroke-width="1.2"/>
<text x="316" y="220.97" fill="#800000" font-family="'Liberation Serif'" font-size="9.5" text-anchor="end" stroke="#800000" stroke-width="0.2">PB3</text>
<text x="331.5" y="215.07" fill="#800000" font-family="'Liberation Serif'" font-size="9.5" text-anchor="start" stroke="#800000" stroke-width="0.2">39</text>
<line x1="323.4" y1="227.5" x2="333.3" y2="227.5" stroke="#800000" stroke-width="1.2"/>
<text x="316" y="231.3" fill="#800000" font-family="'Liberation Serif'" font-size="9.5" text-anchor="end" stroke="#800000" stroke-width="0.2">PA15</text>
<text x="331.5" y="225.4" fill="#800000" font-family="'Liberation Serif'" font-size="9.5" text-anchor="start" stroke="#800000" stroke-width="0.2">38</text>
<path d="M329,223h1v1h-1zM330,224h1v1h-1zM337,223h1v1h-1zM336,224h1v1h-1zM329,231h1v1h-1zM330,230h1v1h-1zM337,231h1v1h-1zM336,230h1v1h-1zM332,226h1v1h-1zM333,227h1v1h-1zM334,228h1v1h-1zM332,228h1v1h-1zM334,226h1v1h-1z" fill="#ff0000" shape-rendering="crispEdges"/>
<line x1="323.4" y1="238.5" x2="333.3" y2="238.5" stroke="#800000" stroke-width="1.2"/>
<text x="316" y="241.63" fill="#800000" font-family="'Liberation Serif'" font-size="9.5" text-anchor="end" stroke="#800000" stroke-width="0.2">PA14</text>
<text x="331.5" y="235.73" fill="#800000" font-family="'Liberation Serif'" font-size="9.5" text-anchor="start" stroke="#800000" stroke-width="0.2">37</text>
<line x1="323.4" y1="248.5" x2="333.3" y2="248.5" stroke="#ff0000" stroke-width="1.2"/>
<text x="316" y="251.96" fill="#ff0000" font-family="'Liberation Serif'" font-size="9.5" text-anchor="end" stroke="#ff0000" stroke-width="0.2">VDD_2</text>
<text x="331.5" y="246.06" fill="#ff0000" font-family="'Liberation Serif'" font-size="9.5" text-anchor="start" stroke="#ff0000" stroke-width="0.2">36</text>
<line x1="323.4" y1="258.5" x2="333.3" y2="258.5" stroke="#000000" stroke-width="1.2"/>
<text x="316" y="262.29" fill="#000000" font-family="'Liberation Serif'" font-size="9.5" text-anchor="end" stroke="#000000" stroke-width="0.2">VSS_2</text>
<text x="331.5" y="256.39" fill="#000000" font-family="'Liberation Serif'" font-size="9.5" text-anchor="start" stroke="#000000" stroke-width="0.2">35</text>
<line x1="323.4" y1="269.5" x2="333.3" y2="269.5" stroke="#800000" stroke-width="1.2"/>
<text x="316" y="272.62" fill="#800000" font-family="'Liberation Serif'" font-size="9.5" text-anchor="end" stroke="#800000" stroke-width="0.2">PA13</text>
<text x="331.5" y="266.72" fill="#800000" font-family="'Liberation Serif'" font-size="9.5" text-anchor="start" stroke="#800000" stroke-width="0.2">34</text>
<line x1="323.4" y1="279.5" x2="333.3" y2="279.5" stroke="#800000" stroke-width="1.2"/>
<text x="316" y="282.95" fill="#800000" font-family="'Liberation Serif'" font-size="9.5" text-anchor="end" stroke="#800000" stroke-width="0.2">PA12</text>
<text x="331.5" y="277.05" fill="#800000" font-family="'Liberation Serif'" font-size="9.5" text-anchor="start" stroke="#800000" stroke-width="0.2">33</text>
<path d="M329,275h1v1h-1zM330,276h1v1h-1zM337,275h1v1h-1zM336,276h1v1h-1zM329,283h1v1h-1zM330,282h1v1h-1zM337,283h1v1h-1zM336,282h1v1h-1zM332,278h1v1h-1zM333,279h1v1h-1zM334,280h1v1h-1zM332,280h1v1h-1zM334,278h1v1h-1z" fill="#ff0000" shape-rendering="crispEdges"/>
<line x1="323.4" y1="289.5" x2="333.3" y2="289.5" stroke="#800000" stroke-width="1.2"/>
<text x="316" y="293.28" fill="#800000" font-family="'Liberation Serif'" font-size="9.5" text-anchor="end" stroke="#800000" stroke-width="0.2">PA11</text>
<text x="331.5" y="287.38" fill="#800000" font-family="'Liberation Serif'" font-size="9.5" text-anchor="start" stroke="#800000" stroke-width="0.2">32</text>
<path d="M329,285h1v1h-1zM330,286h1v1h-1zM337,285h1v1h-1zM336,286h1v1h-1zM329,293h1v1h-1zM330,292h1v1h-1zM337,293h1v1h-1zM336,292h1v1h-1zM332,288h1v1h-1zM333,289h1v1h-1zM334,290h1v1h-1zM332,290h1v1h-1zM334,288h1v1h-1z" fill="#ff0000" shape-rendering="crispEdges"/>
<line x1="323.4" y1="300.5" x2="333.3" y2="300.5" stroke="#800000" stroke-width="1.2"/>
<text x="316" y="303.61" fill="#800000" font-family="'Liberation Serif'" font-size="9.5" text-anchor="end" stroke="#800000" stroke-width="0.2">PA10</text>
<text x="331.5" y="297.71" fill="#800000" font-family="'Liberation Serif'" font-size="9.5" text-anchor="start" stroke="#800000" stroke-width="0.2">31</text>
<line x1="323.4" y1="310.5" x2="333.3" y2="310.5" stroke="#800000" stroke-width="1.2"/>
<text x="316" y="313.94" fill="#800000" font-family="'Liberation Serif'" font-size="9.5" text-anchor="end" stroke="#800000" stroke-width="0.2">PA9</text>
<text x="331.5" y="308.04" fill="#800000" font-family="'Liberation Serif'" font-size="9.5" text-anchor="start" stroke="#800000" stroke-width="0.2">30</text>
<line x1="323.4" y1="320.5" x2="333.3" y2="320.5" stroke="#800000" stroke-width="1.2"/>
<text x="316" y="324.27" fill="#800000" font-family="'Liberation Serif'" font-size="9.5" text-anchor="end" stroke="#800000" stroke-width="0.2">PA8</text>
<text x="331.5" y="318.37" fill="#800000" font-family="'Liberation Serif'" font-size="9.5" text-anchor="start" stroke="#800000" stroke-width="0.2">29</text>
<path d="M329,316h1v1h-1zM330,317h1v1h-1zM337,316h1v1h-1zM336,317h1v1h-1zM329,324h1v1h-1zM330,323h1v1h-1zM337,324h1v1h-1zM336,323h1v1h-1zM332,319h1v1h-1zM333,320h1v1h-1zM334,321h1v1h-1zM332,321h1v1h-1zM334,319h1v1h-1z" fill="#ff0000" shape-rendering="crispEdges"/>
<line x1="323.4" y1="331.5" x2="333.3" y2="331.5" stroke="#800000" stroke-width="1.2"/>
<text x="316" y="334.6" fill="#800000" font-family="'Liberation Serif'" font-size="9.5" text-anchor="end" stroke="#800000" stroke-width="0.2">PB15</text>
<text x="331.5" y="328.7" fill="#800000" font-family="'Liberation Serif'" font-size="9.5" text-anchor="start" stroke="#800000" stroke-width="0.2">28</text>
<path d="M329,327h1v1h-1zM330,328h1v1h-1zM337,327h1v1h-1zM336,328h1v1h-1zM329,335h1v1h-1zM330,334h1v1h-1zM337,335h1v1h-1zM336,334h1v1h-1zM332,330h1v1h-1zM333,331h1v1h-1zM334,332h1v1h-1zM332,332h1v1h-1zM334,330h1v1h-1z" fill="#ff0000" shape-rendering="crispEdges"/>
<line x1="323.4" y1="341.5" x2="333.3" y2="341.5" stroke="#800000" stroke-width="1.2"/>
<text x="316" y="344.93" fill="#800000" font-family="'Liberation Serif'" font-size="9.5" text-anchor="end" stroke="#800000" stroke-width="0.2">PB14</text>
<text x="331.5" y="339.03" fill="#800000" font-family="'Liberation Serif'" font-size="9.5" text-anchor="start" stroke="#800000" stroke-width="0.2">27</text>
<line x1="323.4" y1="351.5" x2="333.3" y2="351.5" stroke="#800000" stroke-width="1.2"/>
<text x="316" y="355.26" fill="#800000" font-family="'Liberation Serif'" font-size="9.5" text-anchor="end" stroke="#800000" stroke-width="0.2">PB13</text>
<text x="331.5" y="349.36" fill="#800000" font-family="'Liberation Serif'" font-size="9.5" text-anchor="start" stroke="#800000" stroke-width="0.2">26</text>
<line x1="323.4" y1="362.5" x2="333.3" y2="362.5" stroke="#800000" stroke-width="1.2"/>
<text x="316" y="365.59" fill="#800000" font-family="'Liberation Serif'" font-size="9.5" text-anchor="end" stroke="#800000" stroke-width="0.2">PB12</text>
<text x="331.5" y="359.69" fill="#800000" font-family="'Liberation Serif'" font-size="9.5" text-anchor="start" stroke="#800000" stroke-width="0.2">25</text>
<path d="M329,358h1v1h-1zM330,359h1v1h-1zM337,358h1v1h-1zM336,359h1v1h-1zM329,366h1v1h-1zM330,365h1v1h-1zM337,366h1v1h-1zM336,365h1v1h-1zM332,361h1v1h-1zM333,362h1v1h-1zM334,363h1v1h-1zM332,363h1v1h-1zM334,361h1v1h-1z" fill="#ff0000" shape-rendering="crispEdges"/>
<path d="M167.7,116.2Q167.7,114.7 169.2,114.7H321.9Q323.4,114.7 323.4,116.2V370.6Q323.4,372.6 321.4,372.6H169.7Q167.7,372.6 167.7,370.6Z" fill="none" stroke="#800000" stroke-width="1.2"/>
<circle cx="172.8" cy="118.9" r="2" fill="#800000"/>
<text x="167.8" y="112.2" fill="#10108c" font-family="'Liberation Sans'" font-size="8.5" text-anchor="start" stroke="#10108c" stroke-width="0.2">U2</text>
<text x="167.8" y="381" fill="#2a2aa8" font-family="'Liberation Sans'" font-size="8.5" text-anchor="start" stroke="#2a2aa8" stroke-width="0.2">STM32F103C6T6</text>
<line x1="136.4" y1="352.5" x2="157.5" y2="352.5" stroke="#000088" stroke-width="1.2"/>
<line x1="136.5" y1="341.7" x2="136.5" y2="362.7" stroke="#800000" stroke-width="1.2"/>
<line x1="133.5" y1="344.7" x2="133.5" y2="359.7" stroke="#800000" stroke-width="1.2"/>
<line x1="130.5" y1="347.9" x2="130.5" y2="356.5" stroke="#800000" stroke-width="1.2"/>
<line x1="127.5" y1="350.8" x2="127.5" y2="353.6" stroke="#800000" stroke-width="1.2"/>
<text x="124" y="355.6" fill="#800000" font-family="'Liberation Serif'" font-size="9.5" text-anchor="end" stroke="#800000" stroke-width="0.2">GND</text>
<line x1="146.8" y1="362.5" x2="157.5" y2="362.5" stroke="#000088" stroke-width="1.2"/>
<line x1="146.5" y1="362.2" x2="146.5" y2="373.4" stroke="#800000" stroke-width="1.2"/>
<line x1="141.8" y1="373.5" x2="151.8" y2="373.5" stroke="#800000" stroke-width="1.3"/>
<text x="146.6" y="382" fill="#800000" font-family="'Liberation Serif'" font-size="9.5" text-anchor="middle" stroke="#800000" stroke-width="0.2">3.3V</text>
<polyline points="333.5,124.5 354.5,124.5 354.5,114.5" fill="none" stroke="#000088" stroke-width="1.2" stroke-linejoin="miter"/>
<line x1="349.3" y1="114.5" x2="359.3" y2="114.5" stroke="#800000" stroke-width="1.3"/>
<text x="354" y="112.4" fill="#800000" font-family="'Liberation Serif'" font-size="9.5" text-anchor="middle" stroke="#800000" stroke-width="0.2">3.3V</text>
<line x1="333.3" y1="134.5" x2="416.2" y2="134.5" stroke="#000088" stroke-width="1.2"/>
<line x1="416.5" y1="134.93" x2="416.5" y2="124.6" stroke="#800000" stroke-width="1.2"/>
<circle cx="416.2" cy="134.93" r="2.6" fill="#000088"/>
<line x1="405.2" y1="124.5" x2="427.2" y2="124.5" stroke="#800000" stroke-width="1.2"/>
<line x1="408.7" y1="121.5" x2="423.7" y2="121.5" stroke="#800000" stroke-width="1.2"/>
<line x1="412.2" y1="118.5" x2="420.2" y2="118.5" stroke="#800000" stroke-width="1.2"/>
<line x1="414.9" y1="115.5" x2="417.5" y2="115.5" stroke="#800000" stroke-width="1.2"/>
<text x="416.5" y="112.4" fill="#800000" font-family="'Liberation Serif'" font-size="9.5" text-anchor="middle" stroke="#800000" stroke-width="0.2">GND</text>
<line x1="333.3" y1="145.5" x2="354" y2="145.5" stroke="#000088" stroke-width="1.2"/>
<text x="343" y="143.46" fill="#800000" font-family="'Liberation Serif'" font-size="9.5" text-anchor="start" stroke="#800000" stroke-width="0.2">EN</text>
<polyline points="333.5,165.5 354.5,165.5 354.5,155.5 373.5,155.5" fill="none" stroke="#000088" stroke-width="1.2" stroke-linejoin="miter"/>
<rect x="373.8" y="151.5" width="21.6" height="7.8" stroke="#0000ff" stroke-width="1.2" fill="none" rx="0"/>
<line x1="395.4" y1="155.5" x2="406" y2="155.5" stroke="#000000" stroke-width="1"/>
<polyline points="406.5,155.5 416.5,155.5 416.5,134.5" fill="none" stroke="#000088" stroke-width="1.2" stroke-linejoin="miter"/>
<text x="373.8" y="148" fill="#000080" font-family="'Liberation Serif'" font-size="9.5" text-anchor="start" stroke="#000080" stroke-width="0.2">R5</text>
<text x="374.6" y="169" fill="#000080" font-family="'Liberation Serif'" font-size="9.5" text-anchor="start" stroke="#000080" stroke-width="0.2">10K</text>
<line x1="333.3" y1="176.5" x2="385.8" y2="176.5" stroke="#000088" stroke-width="1.2"/>
<text x="343" y="174.45" fill="#800000" font-family="'Liberation Serif'" font-size="9.5" text-anchor="start" stroke="#800000" stroke-width="0.2">I2C1_SDA</text>
<line x1="333.3" y1="186.5" x2="385.8" y2="186.5" stroke="#000088" stroke-width="1.2"/>
<text x="343" y="184.78" fill="#800000" font-family="'Liberation Serif'" font-size="9.5" text-anchor="start" stroke="#800000" stroke-width="0.2">I2C1_SCL</text>
<line x1="333.3" y1="217.5" x2="364.7" y2="217.5" stroke="#000088" stroke-width="1.2"/>
<text x="343" y="215.77" fill="#800000" font-family="'Liberation Serif'" font-size="9.5" text-anchor="start" stroke="#800000" stroke-width="0.2">LED</text>
<line x1="333.3" y1="238.5" x2="375" y2="238.5" stroke="#000088" stroke-width="1.2"/>
<text x="343" y="236.43" fill="#800000" font-family="'Liberation Serif'" font-size="9.5" text-anchor="start" stroke="#800000" stroke-width="0.2">SWCLK</text>
<line x1="333.3" y1="269.5" x2="375" y2="269.5" stroke="#000088" stroke-width="1.2"/>
<text x="343" y="267.42" fill="#800000" font-family="'Liberation Serif'" font-size="9.5" text-anchor="start" stroke="#800000" stroke-width="0.2">SWDIO</text>
<line x1="333.3" y1="300.5" x2="395.7" y2="300.5" stroke="#000088" stroke-width="1.2"/>
<text x="343" y="298.41" fill="#800000" font-family="'Liberation Serif'" font-size="9.5" text-anchor="start" stroke="#800000" stroke-width="0.2">USART1_RX</text>
<line x1="333.3" y1="310.5" x2="395.7" y2="310.5" stroke="#000088" stroke-width="1.2"/>
<text x="343" y="308.74" fill="#800000" font-family="'Liberation Serif'" font-size="9.5" text-anchor="start" stroke="#800000" stroke-width="0.2">USART1_TX</text>
<line x1="333.3" y1="248.5" x2="374.7" y2="248.5" stroke="#000088" stroke-width="1.2"/>
<line x1="374.5" y1="243.56" x2="374.5" y2="253.56" stroke="#800000" stroke-width="1.3"/>
<text x="377" y="251.96" fill="#800000" font-family="'Liberation Serif'" font-size="9.5" text-anchor="start" stroke="#800000" stroke-width="0.2">3.3V</text>
<polyline points="333.5,258.5 395.5,258.5 395.5,269.5" fill="none" stroke="#000088" stroke-width="1.2" stroke-linejoin="miter"/>
<line x1="384.4" y1="269.5" x2="406.4" y2="269.5" stroke="#800000" stroke-width="1.2"/>
<line x1="387.9" y1="272.5" x2="402.9" y2="272.5" stroke="#800000" stroke-width="1.2"/>
<line x1="391.4" y1="275.5" x2="399.4" y2="275.5" stroke="#800000" stroke-width="1.2"/>
<line x1="394.1" y1="278.5" x2="396.7" y2="278.5" stroke="#800000" stroke-width="1.2"/>
<text x="395.5" y="288" fill="#800000" font-family="'Liberation Serif'" font-size="9.5" text-anchor="middle" stroke="#800000" stroke-width="0.2">GND</text>
<rect x="286.5" y="41.5" width="21.1" height="51.7" stroke="#800000" stroke-width="1.3" fill="#ffffb0" rx="0"/>
<line x1="271.3" y1="51.5" x2="286.5" y2="51.5" stroke="#000000" stroke-width="1"/>
<text x="296.5" y="55.1" fill="#000000" font-family="'Liberation Serif'" font-size="9.5" text-anchor="middle" stroke="#000000" stroke-width="0.2">1</text>
<line x1="271.3" y1="62.5" x2="286.5" y2="62.5" stroke="#000000" stroke-width="1"/>
<text x="296.5" y="65.5" fill="#000000" font-family="'Liberation Serif'" font-size="9.5" text-anchor="middle" stroke="#000000" stroke-width="0.2">2</text>
<line x1="271.3" y1="72.5" x2="286.5" y2="72.5" stroke="#000000" stroke-width="1"/>
<text x="296.5" y="75.8" fill="#000000" font-family="'Liberation Serif'" font-size="9.5" text-anchor="middle" stroke="#000000" stroke-width="0.2">3</text>
<line x1="271.3" y1="82.5" x2="286.5" y2="82.5" stroke="#000000" stroke-width="1"/>
<text x="296.5" y="86.1" fill="#000000" font-family="'Liberation Serif'" font-size="9.5" text-anchor="middle" stroke="#000000" stroke-width="0.2">4</text>
<line x1="198.7" y1="51.5" x2="271.3" y2="51.5" stroke="#000088" stroke-width="1.2"/>
<text x="198.7" y="50" fill="#800000" font-family="'Liberation Serif'" font-size="9.5" text-anchor="start" stroke="#800000" stroke-width="0.2">SWDIO</text>
<line x1="198.7" y1="62.5" x2="271.3" y2="62.5" stroke="#000088" stroke-width="1.2"/>
<text x="198.7" y="60" fill="#800000" font-family="'Liberation Serif'" font-size="9.5" text-anchor="start" stroke="#800000" stroke-width="0.2">SWCLK</text>
<polyline points="271.5,72.5 250.5,72.5 250.5,82.5" fill="none" stroke="#000088" stroke-width="1.2" stroke-linejoin="miter"/>
<line x1="239.4" y1="82.5" x2="261.4" y2="82.5" stroke="#800000" stroke-width="1.2"/>
<line x1="242.9" y1="85.5" x2="257.9" y2="85.5" stroke="#800000" stroke-width="1.2"/>
<line x1="246.4" y1="88.5" x2="254.4" y2="88.5" stroke="#800000" stroke-width="1.2"/>
<line x1="249.1" y1="91.5" x2="251.7" y2="91.5" stroke="#800000" stroke-width="1.2"/>
<text x="250.4" y="102" fill="#800000" font-family="'Liberation Serif'" font-size="9.5" text-anchor="middle" stroke="#800000" stroke-width="0.2">GND</text>
<polyline points="271.5,82.5 271.5,93.5" fill="none" stroke="#800000" stroke-width="1.2" stroke-linejoin="miter"/>
<line x1="266.3" y1="93.5" x2="276.3" y2="93.5" stroke="#800000" stroke-width="1.3"/>
<text x="271" y="102" fill="#800000" font-family="'Liberation Serif'" font-size="9.5" text-anchor="middle" stroke="#800000" stroke-width="0.2">3.3V</text>
<text x="287" y="102" fill="#000080" font-family="'Liberation Serif'" font-size="9.5" text-anchor="start" stroke="#000080" stroke-width="0.2">JP2</text>
<rect x="380.3" y="31.5" width="20.2" height="50.7" stroke="#800000" stroke-width="1.3" fill="#ffffb0" rx="0"/>
<line x1="364.8" y1="41.5" x2="380.3" y2="41.5" stroke="#000000" stroke-width="1"/>
<text x="390.4" y="44.7" fill="#000000" font-family="'Liberation Serif'" font-size="9.5" text-anchor="middle" stroke="#000000" stroke-width="0.2">1</text>
<line x1="364.8" y1="51.5" x2="380.3" y2="51.5" stroke="#000000" stroke-width="1"/>
<text x="390.4" y="54.9" fill="#000000" font-family="'Liberation Serif'" font-size="9.5" text-anchor="middle" stroke="#000000" stroke-width="0.2">2</text>
<line x1="364.8" y1="62.5" x2="380.3" y2="62.5" stroke="#000000" stroke-width="1"/>
<text x="390.4" y="65.3" fill="#000000" font-family="'Liberation Serif'" font-size="9.5" text-anchor="middle" stroke="#000000" stroke-width="0.2">3</text>
<line x1="364.8" y1="72.5" x2="380.3" y2="72.5" stroke="#000000" stroke-width="1"/>
<text x="390.4" y="75.7" fill="#000000" font-family="'Liberation Serif'" font-size="9.5" text-anchor="middle" stroke="#000000" stroke-width="0.2">4</text>
<line x1="323" y1="41.5" x2="364.8" y2="41.5" stroke="#000088" stroke-width="1.2"/>
<text x="323" y="39.3" fill="#800000" font-family="'Liberation Serif'" font-size="9.5" text-anchor="start" stroke="#800000" stroke-width="0.2">USART1_RX</text>
<line x1="323" y1="51.5" x2="364.8" y2="51.5" stroke="#000088" stroke-width="1.2"/>
<text x="323" y="49.5" fill="#800000" font-family="'Liberation Serif'" font-size="9.5" text-anchor="start" stroke="#800000" stroke-width="0.2">USART1_TX</text>
<polyline points="364.5,62.5 343.5,62.5 343.5,72.5" fill="none" stroke="#000088" stroke-width="1.2" stroke-linejoin="miter"/>
<line x1="332.4" y1="72.5" x2="354.4" y2="72.5" stroke="#800000" stroke-width="1.2"/>
<line x1="335.9" y1="75.5" x2="350.9" y2="75.5" stroke="#800000" stroke-width="1.2"/>
<line x1="339.4" y1="78.5" x2="347.4" y2="78.5" stroke="#800000" stroke-width="1.2"/>
<line x1="342.1" y1="81.5" x2="344.7" y2="81.5" stroke="#800000" stroke-width="1.2"/>
<text x="343.9" y="91" fill="#800000" font-family="'Liberation Serif'" font-size="9.5" text-anchor="middle" stroke="#800000" stroke-width="0.2">GND</text>
<polyline points="364.5,72.5 364.5,82.5" fill="none" stroke="#800000" stroke-width="1.2" stroke-linejoin="miter"/>
<line x1="359.5" y1="82.5" x2="369.5" y2="82.5" stroke="#800000" stroke-width="1.3"/>
<text x="364.5" y="91" fill="#800000" font-family="'Liberation Serif'" font-size="9.5" text-anchor="middle" stroke="#800000" stroke-width="0.2">3.3V</text>
<text x="380.3" y="91" fill="#000080" font-family="'Liberation Serif'" font-size="9.5" text-anchor="start" stroke="#000080" stroke-width="0.2">JP4</text>
<rect x="572.5" y="72.7" width="71.8" height="51.4" stroke="#800000" stroke-width="1.3" fill="#ffffb0" rx="0"/>
<line x1="541" y1="82.5" x2="572.5" y2="82.5" stroke="#000000" stroke-width="1"/>
<text x="564.6" y="80.4" fill="#000000" font-family="'Liberation Serif'" font-size="9.5" text-anchor="end" stroke="#000000" stroke-width="0.2">1</text>
<text x="579.6" y="85.8" fill="#000000" font-family="'Liberation Serif'" font-size="9.5" text-anchor="start" stroke="#000000" stroke-width="0.2">VCC5V</text>
<line x1="541" y1="93.5" x2="572.5" y2="93.5" stroke="#000000" stroke-width="1"/>
<text x="564.6" y="91.4" fill="#000000" font-family="'Liberation Serif'" font-size="9.5" text-anchor="end" stroke="#000000" stroke-width="0.2">2</text>
<text x="579.6" y="96.8" fill="#000000" font-family="'Liberation Serif'" font-size="9.5" text-anchor="start" stroke="#000000" stroke-width="0.2">VCC3.3V</text>
<line x1="541" y1="103.5" x2="572.5" y2="103.5" stroke="#000000" stroke-width="1"/>
<text x="564.6" y="101.6" fill="#000000" font-family="'Liberation Serif'" font-size="9.5" text-anchor="end" stroke="#000000" stroke-width="0.2">3</text>
<text x="579.6" y="107" fill="#000000" font-family="'Liberation Serif'" font-size="9.5" text-anchor="start" stroke="#000000" stroke-width="0.2">OUT</text>
<line x1="541" y1="114.5" x2="572.5" y2="114.5" stroke="#000000" stroke-width="1"/>
<text x="564.6" y="112.2" fill="#000000" font-family="'Liberation Serif'" font-size="9.5" text-anchor="end" stroke="#000000" stroke-width="0.2">4</text>
<text x="579.6" y="117.6" fill="#000000" font-family="'Liberation Serif'" font-size="9.5" text-anchor="start" stroke="#000000" stroke-width="0.2">GND</text>
<line x1="644.3" y1="82.5" x2="675.2" y2="82.5" stroke="#000000" stroke-width="1"/>
<text x="653" y="80.5" fill="#000000" font-family="'Liberation Serif'" font-size="9.5" text-anchor="start" stroke="#000000" stroke-width="0.2">8</text>
<text x="636.5" y="85.9" fill="#000000" font-family="'Liberation Serif'" font-size="9.5" text-anchor="end" stroke="#000000" stroke-width="0.2">DIR</text>
<line x1="644.3" y1="93.5" x2="675.2" y2="93.5" stroke="#000000" stroke-width="1"/>
<text x="653" y="91.5" fill="#000000" font-family="'Liberation Serif'" font-size="9.5" text-anchor="start" stroke="#000000" stroke-width="0.2">7</text>
<text x="636.5" y="96.9" fill="#000000" font-family="'Liberation Serif'" font-size="9.5" text-anchor="end" stroke="#000000" stroke-width="0.2">SCL</text>
<line x1="644.3" y1="103.5" x2="675.2" y2="103.5" stroke="#000000" stroke-width="1"/>
<text x="653" y="101.8" fill="#000000" font-family="'Liberation Serif'" font-size="9.5" text-anchor="start" stroke="#000000" stroke-width="0.2">6</text>
<text x="636.5" y="107.2" fill="#000000" font-family="'Liberation Serif'" font-size="9.5" text-anchor="end" stroke="#000000" stroke-width="0.2">SDA</text>
<line x1="644.3" y1="114.5" x2="675.2" y2="114.5" stroke="#000000" stroke-width="1"/>
<text x="653" y="112.4" fill="#000000" font-family="'Liberation Serif'" font-size="9.5" text-anchor="start" stroke="#000000" stroke-width="0.2">5</text>
<text x="636.5" y="117.8" fill="#000000" font-family="'Liberation Serif'" font-size="9.5" text-anchor="end" stroke="#000000" stroke-width="0.2">PGO</text>
<text x="572.6" y="60" fill="#000080" font-family="'Liberation Serif'" font-size="9.5" text-anchor="start" stroke="#000080" stroke-width="0.2">U1</text>
<text x="572.6" y="70.7" fill="#000080" font-family="'Liberation Serif'" font-size="9.5" text-anchor="start" stroke="#000080" stroke-width="0.2">AS5600</text>
<text x="572.6" y="133" fill="#000080" font-family="'Liberation Serif'" font-size="9.5" text-anchor="start" stroke="#000080" stroke-width="0.2">AS5600</text>
<line x1="499.5" y1="88.4" x2="499.5" y2="98.4" stroke="#800000" stroke-width="1.3"/>
<line x1="499.6" y1="93.5" x2="509.5" y2="93.5" stroke="#800000" stroke-width="1.2"/>
<polyline points="541.5,82.5 509.5,82.5 509.5,93.5 541.5,93.5" fill="none" stroke="#000088" stroke-width="1.2" stroke-linejoin="miter"/>
<circle cx="509.5" cy="93.4" r="2.6" fill="#000088"/>
<text x="496.8" y="96.6" fill="#800000" font-family="'Liberation Serif'" font-size="9.5" text-anchor="end" stroke="#800000" stroke-width="0.2">3.3V</text>
<path d="M537,99h1v1h-1zM538,100h1v1h-1zM545,99h1v1h-1zM544,100h1v1h-1zM537,107h1v1h-1zM538,106h1v1h-1zM545,107h1v1h-1zM544,106h1v1h-1zM540,102h1v1h-1zM541,103h1v1h-1zM542,104h1v1h-1zM540,104h1v1h-1zM542,102h1v1h-1z" fill="#ff0000" shape-rendering="crispEdges"/>
<line x1="541.5" y1="114.2" x2="541.5" y2="122" stroke="#000000" stroke-width="1"/>
<line x1="541.5" y1="122" x2="541.5" y2="127" stroke="#000088" stroke-width="1.2"/>
<line x1="541.5" y1="127" x2="541.5" y2="134.3" stroke="#800000" stroke-width="1.2"/>
<line x1="530" y1="134.5" x2="552" y2="134.5" stroke="#800000" stroke-width="1.2"/>
<line x1="533.5" y1="137.5" x2="548.5" y2="137.5" stroke="#800000" stroke-width="1.2"/>
<line x1="537" y1="140.5" x2="545" y2="140.5" stroke="#800000" stroke-width="1.2"/>
<line x1="539.7" y1="143.5" x2="542.3" y2="143.5" stroke="#800000" stroke-width="1.2"/>
<text x="540.8" y="152.3" fill="#800000" font-family="'Liberation Serif'" font-size="9.5" text-anchor="middle" stroke="#800000" stroke-width="0.2">GND</text>
<line x1="675.5" y1="82.5" x2="675.5" y2="62" stroke="#000088" stroke-width="1.2"/>
<line x1="675.5" y1="62" x2="675.5" y2="51.5" stroke="#800000" stroke-width="1.2"/>
<line x1="664.3" y1="51.5" x2="686.3" y2="51.5" stroke="#800000" stroke-width="1.2"/>
<line x1="667.8" y1="48.5" x2="682.8" y2="48.5" stroke="#800000" stroke-width="1.2"/>
<line x1="671.3" y1="45.5" x2="679.3" y2="45.5" stroke="#800000" stroke-width="1.2"/>
<line x1="674" y1="42.5" x2="676.6" y2="42.5" stroke="#800000" stroke-width="1.2"/>
<text x="676" y="38.7" fill="#800000" font-family="'Liberation Serif'" font-size="9.5" text-anchor="middle" stroke="#800000" stroke-width="0.2">GND</text>
<line x1="701.8" y1="31.5" x2="711.8" y2="31.5" stroke="#800000" stroke-width="1.3"/>
<text x="706.5" y="29.8" fill="#800000" font-family="'Liberation Serif'" font-size="9.5" text-anchor="middle" stroke="#800000" stroke-width="0.2">3.3V</text>
<line x1="706.5" y1="31.8" x2="706.5" y2="41.2" stroke="#800000" stroke-width="1.2"/>
<line x1="696.4" y1="41.5" x2="717.7" y2="41.5" stroke="#000088" stroke-width="1.2"/>
<line x1="696.5" y1="41.2" x2="696.5" y2="51.5" stroke="#000000" stroke-width="1"/>
<line x1="717.5" y1="41.2" x2="717.5" y2="51.5" stroke="#000000" stroke-width="1"/>
<circle cx="706.8" cy="41.2" r="2.6" fill="#000088"/>
<rect x="692.3" y="51.5" width="8.3" height="21.1" stroke="#0000ff" stroke-width="1.2" fill="none" rx="0"/>
<rect x="713.6" y="51.5" width="8.1" height="21.1" stroke="#0000ff" stroke-width="1.2" fill="none" rx="0"/>
<text x="701.6" y="59.4" fill="#000080" font-family="'Liberation Serif'" font-size="9.5" text-anchor="start" stroke="#000080" stroke-width="0.2">R1</text>
<text x="701.6" y="69.2" fill="#000080" font-family="'Liberation Serif'" font-size="9.5" text-anchor="start" stroke="#000080" stroke-width="0.2">10K</text>
<text x="722.7" y="59.4" fill="#000080" font-family="'Liberation Serif'" font-size="9.5" text-anchor="start" stroke="#000080" stroke-width="0.2">R2</text>
<text x="722.7" y="69.2" fill="#000080" font-family="'Liberation Serif'" font-size="9.5" text-anchor="start" stroke="#000080" stroke-width="0.2">10K</text>
<line x1="696.5" y1="51.5" x2="696.5" y2="82" stroke="#000000" stroke-width="1"/>
<line x1="696.5" y1="82" x2="696.5" y2="103.8" stroke="#000088" stroke-width="1.2"/>
<line x1="717.5" y1="72.6" x2="717.5" y2="83" stroke="#000000" stroke-width="1"/>
<line x1="717.5" y1="83" x2="717.5" y2="93.5" stroke="#000088" stroke-width="1.2"/>
<line x1="675.2" y1="93.5" x2="780" y2="93.5" stroke="#000088" stroke-width="1.2"/>
<line x1="675.2" y1="103.5" x2="780" y2="103.5" stroke="#000088" stroke-width="1.2"/>
<circle cx="717.7" cy="93.5" r="2.6" fill="#000088"/>
<circle cx="696.4" cy="103.8" r="2.6" fill="#000088"/>
<text x="779" y="91" fill="#800000" font-family="'Liberation Serif'" font-size="9.5" text-anchor="end" stroke="#800000" stroke-width="0.2">AS5600_SCL</text>
<text x="779" y="101.6" fill="#800000" font-family="'Liberation Serif'" font-size="9.5" text-anchor="end" stroke="#800000" stroke-width="0.2">AS5600_SDA</text>
<polyline points="675.5,114.5 675.5,124.5 686.5,124.5" fill="none" stroke="#000000" stroke-width="1" stroke-linejoin="miter"/>
<rect x="686.2" y="120.5" width="20.3" height="7.9" stroke="#0000ff" stroke-width="1.2" fill="none" rx="0"/>
<line x1="706.5" y1="124.5" x2="717.4" y2="124.5" stroke="#000000" stroke-width="1"/>
<line x1="717.4" y1="124.5" x2="728.2" y2="124.5" stroke="#800000" stroke-width="1.2"/>
<line x1="728.5" y1="114" x2="728.5" y2="135" stroke="#800000" stroke-width="1.2"/>
<line x1="731.5" y1="117" x2="731.5" y2="132" stroke="#800000" stroke-width="1.2"/>
<line x1="734.5" y1="120.2" x2="734.5" y2="128.8" stroke="#800000" stroke-width="1.2"/>
<line x1="737.5" y1="123.1" x2="737.5" y2="125.9" stroke="#800000" stroke-width="1.2"/>
<text x="740.4" y="128.4" fill="#800000" font-family="'Liberation Serif'" font-size="9.5" text-anchor="start" stroke="#800000" stroke-width="0.2">GND</text>
<text x="685.2" y="117.6" fill="#000080" font-family="'Liberation Serif'" font-size="9.5" text-anchor="start" stroke="#000080" stroke-width="0.2">R8</text>
<text x="687" y="138.3" fill="#000080" font-family="'Liberation Serif'" font-size="9.5" text-anchor="start" stroke="#000080" stroke-width="0.2">1K</text>
<line x1="540.9" y1="176.5" x2="675.9" y2="176.5" stroke="#000088" stroke-width="1.2"/>
<line x1="540.9" y1="186.5" x2="675.9" y2="186.5" stroke="#000088" stroke-width="1.2"/>
<text x="541.5" y="174.4" fill="#800000" font-family="'Liberation Serif'" font-size="9.5" text-anchor="start" stroke="#800000" stroke-width="0.2">AS5600_SCL</text>
<text x="674" y="174.4" fill="#800000" font-family="'Liberation Serif'" font-size="9.5" text-anchor="end" stroke="#800000" stroke-width="0.2">I2C1_SCL</text>
<text x="541.5" y="185.2" fill="#800000" font-family="'Liberation Serif'" font-size="9.5" text-anchor="start" stroke="#800000" stroke-width="0.2">AS5600_SDA</text>
<text x="674" y="185.2" fill="#800000" font-family="'Liberation Serif'" font-size="9.5" text-anchor="end" stroke="#800000" stroke-width="0.2">I2C1_SDA</text>
<line x1="48.5" y1="472.3" x2="48.5" y2="482.3" stroke="#800000" stroke-width="1.3"/>
<line x1="48.4" y1="477.5" x2="58" y2="477.5" stroke="#800000" stroke-width="1.2"/>
<line x1="58" y1="477.5" x2="69.5" y2="477.5" stroke="#000000" stroke-width="1"/>
<text x="45.4" y="480.7" fill="#800000" font-family="'Liberation Serif'" font-size="9.5" text-anchor="end" stroke="#800000" stroke-width="0.2">3.3V</text>
<rect x="69.5" y="472.7" width="20" height="8.5" stroke="#0000ff" stroke-width="1.2" fill="none" rx="0"/>
<text x="68.2" y="469.9" fill="#000080" font-family="'Liberation Serif'" font-size="9.5" text-anchor="start" stroke="#000080" stroke-width="0.2">R6</text>
<text x="68.9" y="491.3" fill="#000080" font-family="'Liberation Serif'" font-size="9.5" text-anchor="start" stroke="#000080" stroke-width="0.2">10K</text>
<line x1="89.5" y1="477.5" x2="100.3" y2="477.5" stroke="#000000" stroke-width="1"/>
<line x1="100.5" y1="446.5" x2="100.5" y2="477.3" stroke="#000088" stroke-width="1.2"/>
<text x="98.4" y="469.9" fill="#800000" font-family="'Liberation Serif'" font-size="9.5" text-anchor="start" stroke="#800000" stroke-width="0.2" transform="rotate(-90 98.4 469.9)">NRST</text>
<line x1="100.3" y1="477.5" x2="118" y2="477.5" stroke="#000088" stroke-width="1.2"/>
<line x1="118" y1="477.5" x2="126.4" y2="477.5" stroke="#000000" stroke-width="1"/>
<line x1="126.5" y1="472.5" x2="126.5" y2="482.1" stroke="#0000ff" stroke-width="1.3"/>
<line x1="131.5" y1="472.5" x2="131.5" y2="482.1" stroke="#0000ff" stroke-width="1.3"/>
<line x1="131.6" y1="477.5" x2="142" y2="477.5" stroke="#000000" stroke-width="1"/>
<line x1="142" y1="477.5" x2="157.2" y2="477.5" stroke="#000088" stroke-width="1.2"/>
<text x="125" y="469" fill="#000080" font-family="'Liberation Serif'" font-size="9.5" text-anchor="start" stroke="#000080" stroke-width="0.2">C6</text>
<text x="126" y="492.3" fill="#000080" font-family="'Liberation Serif'" font-size="9.5" text-anchor="start" stroke="#000080" stroke-width="0.2">1uf</text>
<line x1="157.2" y1="477.5" x2="167.5" y2="477.5" stroke="#800000" stroke-width="1.2"/>
<line x1="167.5" y1="466.8" x2="167.5" y2="487.8" stroke="#800000" stroke-width="1.2"/>
<line x1="170.5" y1="469.8" x2="170.5" y2="484.8" stroke="#800000" stroke-width="1.2"/>
<line x1="173.5" y1="473" x2="173.5" y2="481.6" stroke="#800000" stroke-width="1.2"/>
<line x1="176.5" y1="475.9" x2="176.5" y2="478.7" stroke="#800000" stroke-width="1.2"/>
<text x="180.2" y="480.7" fill="#800000" font-family="'Liberation Serif'" font-size="9.5" text-anchor="start" stroke="#800000" stroke-width="0.2">GND</text>
<circle cx="100.3" cy="477.3" r="2.6" fill="#000088"/>
<circle cx="157.2" cy="477.3" r="2.6" fill="#000088"/>
<polyline points="100.5,477.5 100.5,508.5 110.5,508.5" fill="none" stroke="#000088" stroke-width="1.2" stroke-linejoin="miter"/>
<polyline points="141.5,508.5 157.5,508.5 157.5,477.5" fill="none" stroke="#000088" stroke-width="1.2" stroke-linejoin="miter"/>
<circle cx="113.4" cy="507.2" r="2.6" fill="none" stroke="#0000ff" stroke-width="1.2"/>
<circle cx="138.6" cy="507.2" r="2.6" fill="none" stroke="#0000ff" stroke-width="1.2"/>
<line x1="110" y1="500.5" x2="142.3" y2="500.5" stroke="#0000ff" stroke-width="1.3"/>
<rect x="121.8" y="497.6" width="9.3" height="3.2" fill="#0000ff"/>
<text x="109.2" y="495.1" fill="#000080" font-family="'Liberation Serif'" font-size="9.5" text-anchor="start" stroke="#000080" stroke-width="0.2">K1</text>
<path d="M109.9,513.5L113.1,513.5M111.6,512.3L110.4,516.3M110.1,516.3L113.1,516.3M111.8,514.8L111.8,521.3M109.8,518.8L113.2,518.5M114.2,513.3L118.1,513.3L114.8,516.3M115.4,514.3L118.6,516.3M114.6,517.6L118.2,517.6M116.4,517.6L116.4,520.9M114,520.9L118.6,520.9M120.5,512.3L119.3,514.1M119.6,514.3L119.6,521.3M119.6,514.3L123,514.3L123,521.3M119.6,516.8L123,516.8M119.6,519L123,519M121.3,514.3L121.3,519M124.3,514.3L124.3,517.9L127.7,517.9L127.7,514.3L124.3,514.3M126,512.6L126,520.8M123.8,520.9L128,520.5M128.4,514.9L131.4,514.9M130.1,512.3L130.1,521.1L129.2,520.5M128.4,518.6L131.4,517.1M134.7,512.3L134.7,513.5M132.2,514.9L132.2,513.7L137.4,513.7L137.4,514.9M131.9,517.5L137.4,517.5M134,514.9L132.9,517.5L136.9,521.3M136,517.5L132.2,521.3M139.3,512.3L137.8,514.5M138,515.1L140.8,515.1M138,517.1L140.8,517.1M138,519.1L140.8,519.1M139.4,515.1L139.4,520.9L140.8,520.1M142.8,513.3L146.8,513.3M142.8,515.3L146.8,515.3M143.3,517.3L146.3,517.3M142.8,519.1L146.8,519.1M144.8,512.3L144.8,520.1M141.4,514.6L142.6,514.6L141.7,518.3L143,520.1M141.4,520.9L147,520.9" stroke="#000080" stroke-width="1.05" fill="none" stroke-linecap="square"/>
<line x1="218.7" y1="477.5" x2="240.1" y2="477.5" stroke="#000088" stroke-width="1.2"/>
<text x="218.7" y="475.1" fill="#800000" font-family="'Liberation Serif'" font-size="9.5" text-anchor="start" stroke="#800000" stroke-width="0.2">LED</text>
<line x1="240.1" y1="477.5" x2="250" y2="477.5" stroke="#000000" stroke-width="1"/>
<rect x="250" y="472.3" width="21.3" height="9.1" stroke="#0000ff" stroke-width="1.2" fill="none" rx="0"/>
<text x="249.5" y="469.9" fill="#000080" font-family="'Liberation Serif'" font-size="9.5" text-anchor="start" stroke="#000080" stroke-width="0.2">R7</text>
<text x="249.5" y="491.3" fill="#000080" font-family="'Liberation Serif'" font-size="9.5" text-anchor="start" stroke="#000080" stroke-width="0.2">4.7K</text>
<line x1="271.3" y1="477.5" x2="282" y2="477.5" stroke="#000000" stroke-width="1"/>
<line x1="282" y1="477.5" x2="296.2" y2="477.5" stroke="#000088" stroke-width="1.2"/>
<path d="M296.2,468.5L307.4,477.3L296.2,486Z" fill="#0000ff" stroke="#0000ff" stroke-width="1"/>
<line x1="308.5" y1="467.5" x2="308.5" y2="487" stroke="#0000ff" stroke-width="1.6"/>
<line x1="308" y1="477.5" x2="322.3" y2="477.5" stroke="#000000" stroke-width="1"/>
<line x1="322.3" y1="477.5" x2="333.5" y2="477.5" stroke="#800000" stroke-width="1.2"/>
<line x1="333.5" y1="466.8" x2="333.5" y2="487.8" stroke="#800000" stroke-width="1.2"/>
<line x1="336.5" y1="469.8" x2="336.5" y2="484.8" stroke="#800000" stroke-width="1.2"/>
<line x1="339.5" y1="473" x2="339.5" y2="481.6" stroke="#800000" stroke-width="1.2"/>
<line x1="342.5" y1="475.9" x2="342.5" y2="478.7" stroke="#800000" stroke-width="1.2"/>
<text x="346" y="480.7" fill="#800000" font-family="'Liberation Serif'" font-size="9.5" text-anchor="start" stroke="#800000" stroke-width="0.2">GND</text>
<line x1="297.5" y1="466" x2="302" y2="461.5" stroke="#0000ff" stroke-width="1.1"/>
<path d="M303.1,460.4L299.3,461.2L302.3,464.2Z" fill="#0000ff"/>
<line x1="305.8" y1="466" x2="310.3" y2="461.5" stroke="#0000ff" stroke-width="1.1"/>
<path d="M311.40000000000003,460.4L307.6,461.2L310.6,464.2Z" fill="#0000ff"/>
<text x="291.1" y="457.2" fill="#000080" font-family="'Liberation Serif'" font-size="9.5" text-anchor="start" stroke="#000080" stroke-width="0.2">LED1</text>
<path d="M293.6,488.6L292,491.2L294,491.6L291.8,494.8L294.6,494.2M291.4,497L295,495.8M296,490.2L300.2,490.2M298.1,490.2L298.1,496.8M295.6,496.8L300.6,496.8M304.4,488.6L302.2,491.2M303.2,489.7L307.6,489.7L306,491.6M302.3,491.8L308.4,491.8L308.4,494.6L302.3,494.6M305.3,491.8L305.3,494.6M302.3,491.8L302.3,497.2L309.6,497.2L309.6,496" stroke="#000080" stroke-width="1.05" fill="none" stroke-linecap="square"/>
<rect x="177.6" y="570.4" width="93.9" height="40.6" stroke="#800000" stroke-width="1.3" fill="#ffffb0" rx="0"/>
<line x1="147.4" y1="580.5" x2="177.6" y2="580.5" stroke="#000000" stroke-width="1"/>
<path d="M171.5,578.3L174,578.3L177.4,580.5L174,582.7L171.5,582.7Z" fill="#fffcf7" stroke="#000000" stroke-width="1"/>
<text x="170" y="578.9" fill="#000000" font-family="'Liberation Serif'" font-size="9.5" text-anchor="end" stroke="#000000" stroke-width="0.2">1</text>
<text x="185.3" y="583.5" fill="#000000" font-family="'Liberation Serif'" font-size="9.5" text-anchor="start" stroke="#000000" stroke-width="0.2">VIN</text>
<line x1="147.4" y1="590.5" x2="177.6" y2="590.5" stroke="#000000" stroke-width="1"/>
<path d="M171.5,588.3L174,588.3L177.4,590.5L174,592.7L171.5,592.7Z" fill="#fffcf7" stroke="#000000" stroke-width="1"/>
<text x="170" y="589.6" fill="#000000" font-family="'Liberation Serif'" font-size="9.5" text-anchor="end" stroke="#000000" stroke-width="0.2">2</text>
<text x="185.3" y="594.2" fill="#000000" font-family="'Liberation Serif'" font-size="9.5" text-anchor="start" stroke="#000000" stroke-width="0.2">GND</text>
<line x1="147.4" y1="601.5" x2="177.6" y2="601.5" stroke="#000000" stroke-width="1"/>
<path d="M171.5,599.3L174,599.3L177.4,601.5L174,603.7L171.5,603.7Z" fill="#fffcf7" stroke="#000000" stroke-width="1"/>
<text x="170" y="600" fill="#000000" font-family="'Liberation Serif'" font-size="9.5" text-anchor="end" stroke="#000000" stroke-width="0.2">3</text>
<text x="185.3" y="604.6" fill="#000000" font-family="'Liberation Serif'" font-size="9.5" text-anchor="start" stroke="#000000" stroke-width="0.2">EN</text>
<line x1="271.5" y1="580.5" x2="302.3" y2="580.5" stroke="#000000" stroke-width="1"/>
<path d="M271.8,580.5L274.5,578.3L277.6,578.3L277.6,582.7L274.5,582.7Z" fill="#fffcf7" stroke="#000000" stroke-width="1"/>
<text x="280" y="578.9" fill="#000000" font-family="'Liberation Serif'" font-size="9.5" text-anchor="start" stroke="#000000" stroke-width="0.2">5</text>
<text x="263.8" y="583.5" fill="#000000" font-family="'Liberation Serif'" font-size="9.5" text-anchor="end" stroke="#000000" stroke-width="0.2">VOUT</text>
<line x1="271.5" y1="601.5" x2="302.3" y2="601.5" stroke="#000000" stroke-width="1"/>
<path d="M271.8,601.5L274.5,599.3L277.6,599.3L277.6,603.7L274.5,603.7Z" fill="#fffcf7" stroke="#000000" stroke-width="1"/>
<text x="280" y="600" fill="#000000" font-family="'Liberation Serif'" font-size="9.5" text-anchor="start" stroke="#000000" stroke-width="0.2">4</text>
<text x="263.8" y="604.6" fill="#000000" font-family="'Liberation Serif'" font-size="9.5" text-anchor="end" stroke="#000000" stroke-width="0.2">NC</text>
<text x="178.2" y="568" fill="#000080" font-family="'Liberation Serif'" font-size="9.5" text-anchor="start" stroke="#000080" stroke-width="0.2">U3</text>
<text x="178.2" y="620.3" fill="#000080" font-family="'Liberation Serif'" font-size="9.5" text-anchor="start" stroke="#000080" stroke-width="0.2">RT9013-33GB</text>
<polyline points="147.5,580.5 63.5,580.5 63.5,590.5 147.5,590.5" fill="none" stroke="#000088" stroke-width="1.2" stroke-linejoin="miter"/>
<line x1="88.9" y1="580.5" x2="94.5" y2="580.5" stroke="#fffcf7" stroke-width="3"/>
<line x1="88.5" y1="574.8" x2="88.5" y2="585.4" stroke="#0000ff" stroke-width="1.3"/>
<line x1="94.5" y1="574.8" x2="94.5" y2="585.4" stroke="#0000ff" stroke-width="1.3"/>
<polyline points="105.5,580.5 105.5,601.5 147.5,601.5" fill="none" stroke="#000088" stroke-width="1.2" stroke-linejoin="miter"/>
<line x1="126.5" y1="560.5" x2="126.5" y2="580.1" stroke="#800000" stroke-width="1.2"/>
<line x1="121.3" y1="560.5" x2="131.3" y2="560.5" stroke="#800000" stroke-width="1.3"/>
<text x="126.3" y="558.3" fill="#800000" font-family="'Liberation Serif'" font-size="9.5" text-anchor="middle" stroke="#800000" stroke-width="0.2">VCC</text>
<circle cx="105.3" cy="580.1" r="2.6" fill="#000088"/>
<circle cx="126.3" cy="580.1" r="2.6" fill="#000088"/>
<circle cx="63.3" cy="590.8" r="2.6" fill="#000088"/>
<line x1="63.5" y1="590.8" x2="63.5" y2="601.2" stroke="#800000" stroke-width="1.2"/>
<line x1="52.3" y1="601.5" x2="74.3" y2="601.5" stroke="#800000" stroke-width="1.2"/>
<line x1="55.8" y1="604.5" x2="70.8" y2="604.5" stroke="#800000" stroke-width="1.2"/>
<line x1="59.3" y1="607.5" x2="67.3" y2="607.5" stroke="#800000" stroke-width="1.2"/>
<line x1="62" y1="610.5" x2="64.6" y2="610.5" stroke="#800000" stroke-width="1.2"/>
<text x="64" y="620" fill="#800000" font-family="'Liberation Serif'" font-size="9.5" text-anchor="middle" stroke="#800000" stroke-width="0.2">GND</text>
<text x="88.9" y="572.7" fill="#000080" font-family="'Liberation Serif'" font-size="9.5" text-anchor="start" stroke="#000080" stroke-width="0.2">C7</text>
<text x="89.5" y="595" fill="#000080" font-family="'Liberation Serif'" font-size="9.5" text-anchor="start" stroke="#000080" stroke-width="0.2">1uf</text>
<line x1="302.5" y1="560.5" x2="302.5" y2="580.1" stroke="#800000" stroke-width="1.2"/>
<line x1="297.5" y1="560.5" x2="307.5" y2="560.5" stroke="#800000" stroke-width="1.3"/>
<text x="302.5" y="558.3" fill="#800000" font-family="'Liberation Serif'" font-size="9.5" text-anchor="middle" stroke="#800000" stroke-width="0.2">3.3V</text>
<circle cx="302.3" cy="580.1" r="2.6" fill="#000088"/>
<line x1="302.3" y1="580.5" x2="312.6" y2="580.5" stroke="#000000" stroke-width="1"/>
<line x1="312.5" y1="574.9" x2="312.5" y2="585.3" stroke="#0000ff" stroke-width="1.3"/>
<line x1="317.5" y1="574.9" x2="317.5" y2="585.3" stroke="#0000ff" stroke-width="1.3"/>
<line x1="317.3" y1="580.5" x2="323.2" y2="580.5" stroke="#000000" stroke-width="1"/>
<line x1="323.2" y1="580.5" x2="333.5" y2="580.5" stroke="#800000" stroke-width="1.2"/>
<line x1="333.5" y1="569.6" x2="333.5" y2="590.6" stroke="#800000" stroke-width="1.2"/>
<line x1="336.5" y1="572.6" x2="336.5" y2="587.6" stroke="#800000" stroke-width="1.2"/>
<line x1="339.5" y1="575.8" x2="339.5" y2="584.4" stroke="#800000" stroke-width="1.2"/>
<line x1="342.5" y1="578.7" x2="342.5" y2="581.5" stroke="#800000" stroke-width="1.2"/>
<text x="346" y="583.9" fill="#800000" font-family="'Liberation Serif'" font-size="9.5" text-anchor="start" stroke="#800000" stroke-width="0.2">GND</text>
<text x="311.6" y="572.7" fill="#000080" font-family="'Liberation Serif'" font-size="9.5" text-anchor="start" stroke="#000080" stroke-width="0.2">C8</text>
<text x="312" y="595" fill="#000080" font-family="'Liberation Serif'" font-size="9.5" text-anchor="start" stroke="#000080" stroke-width="0.2">1uf</text>
<path d="M298,597h1v1h-1zM299,598h1v1h-1zM306,597h1v1h-1zM305,598h1v1h-1zM298,605h1v1h-1zM299,604h1v1h-1zM306,605h1v1h-1zM305,604h1v1h-1zM301,600h1v1h-1zM302,601h1v1h-1zM303,602h1v1h-1zM301,602h1v1h-1zM303,600h1v1h-1z" fill="#ff0000" shape-rendering="crispEdges"/>
<rect x="214.5" y="642.5" width="20.4" height="31.9" stroke="#800000" stroke-width="1.3" fill="#ffffb0" rx="0"/>
<line x1="198.8" y1="653.5" x2="214.5" y2="653.5" stroke="#000000" stroke-width="1"/>
<line x1="188.4" y1="653.5" x2="198.8" y2="653.5" stroke="#800000" stroke-width="1.2"/>
<line x1="188.5" y1="648.5" x2="188.5" y2="658.5" stroke="#800000" stroke-width="1.3"/>
<text x="186.3" y="656.8" fill="#800000" font-family="'Liberation Serif'" font-size="9.5" text-anchor="end" stroke="#800000" stroke-width="0.2">VCC</text>
<polyline points="214.5,663.5 198.5,663.5 198.5,674.5" fill="none" stroke="#000000" stroke-width="1" stroke-linejoin="miter"/>
<line x1="187.8" y1="674.5" x2="209.8" y2="674.5" stroke="#800000" stroke-width="1.2"/>
<line x1="191.3" y1="677.5" x2="206.3" y2="677.5" stroke="#800000" stroke-width="1.2"/>
<line x1="194.8" y1="680.5" x2="202.8" y2="680.5" stroke="#800000" stroke-width="1.2"/>
<line x1="197.5" y1="683.5" x2="200.1" y2="683.5" stroke="#800000" stroke-width="1.2"/>
<text x="198.8" y="692.6" fill="#800000" font-family="'Liberation Serif'" font-size="9.5" text-anchor="middle" stroke="#800000" stroke-width="0.2">GND</text>
<text x="224" y="657" fill="#000000" font-family="'Liberation Serif'" font-size="9.5" text-anchor="middle" stroke="#000000" stroke-width="0.2">1</text>
<text x="224" y="667" fill="#000000" font-family="'Liberation Serif'" font-size="9.5" text-anchor="middle" stroke="#000000" stroke-width="0.2">2</text>
<text x="214.3" y="681.7" fill="#000080" font-family="'Liberation Serif'" font-size="9.5" text-anchor="start" stroke="#000080" stroke-width="0.2">JP3</text>
<path d="M634.5,281.9Q634.5,279.9 636.5,279.9H756.5Q758.5,279.9 758.5,281.9V445.2H634.5Z" fill="none" stroke="#800000" stroke-width="1.2"/>
<circle cx="639.5" cy="285.2" r="1.4" fill="#800000"/>
<text x="634.6" y="278" fill="#0000ff" font-family="'Liberation Sans'" font-size="8.5" text-anchor="start" stroke="#0000ff" stroke-width="0.2">U4</text>
<text x="634.6" y="454.4" fill="#2020ff" font-family="'Liberation Sans'" font-size="8.2" text-anchor="start" stroke="#2020ff" stroke-width="0.2">DRV8313PWPR</text>
<line x1="623.6" y1="300.5" x2="634.5" y2="300.5" stroke="#800000" stroke-width="1.2"/>
<text x="626" y="298.4" fill="#800000" font-family="'Liberation Serif'" font-size="9.5" text-anchor="end" stroke="#800000" stroke-width="0.2">1</text>
<text x="641.6" y="303.8" fill="#800000" font-family="'Liberation Serif'" font-size="9.5" text-anchor="start" stroke="#800000" stroke-width="0.2">CP1</text>
<line x1="623.6" y1="310.5" x2="634.5" y2="310.5" stroke="#800000" stroke-width="1.2"/>
<text x="626" y="308.8" fill="#800000" font-family="'Liberation Serif'" font-size="9.5" text-anchor="end" stroke="#800000" stroke-width="0.2">2</text>
<text x="641.6" y="314.2" fill="#800000" font-family="'Liberation Serif'" font-size="9.5" text-anchor="start" stroke="#800000" stroke-width="0.2">CP2</text>
<line x1="623.6" y1="321.5" x2="634.5" y2="321.5" stroke="#800000" stroke-width="1.2"/>
<text x="626" y="319.21" fill="#800000" font-family="'Liberation Serif'" font-size="9.5" text-anchor="end" stroke="#800000" stroke-width="0.2">3</text>
<text x="641.6" y="324.61" fill="#800000" font-family="'Liberation Serif'" font-size="9.5" text-anchor="start" stroke="#800000" stroke-width="0.2">VCP</text>
<line x1="623.6" y1="331.5" x2="634.5" y2="331.5" stroke="#800000" stroke-width="1.2"/>
<text x="626" y="329.61" fill="#800000" font-family="'Liberation Serif'" font-size="9.5" text-anchor="end" stroke="#800000" stroke-width="0.2">4</text>
<text x="641.6" y="335.01" fill="#800000" font-family="'Liberation Serif'" font-size="9.5" text-anchor="start" stroke="#800000" stroke-width="0.2">VM</text>
<line x1="623.6" y1="342.5" x2="634.5" y2="342.5" stroke="#800000" stroke-width="1.2"/>
<text x="626" y="340.02" fill="#800000" font-family="'Liberation Serif'" font-size="9.5" text-anchor="end" stroke="#800000" stroke-width="0.2">5</text>
<text x="641.6" y="345.42" fill="#800000" font-family="'Liberation Serif'" font-size="9.5" text-anchor="start" stroke="#800000" stroke-width="0.2">OUT1</text>
<line x1="623.6" y1="352.5" x2="634.5" y2="352.5" stroke="#000000" stroke-width="1.2"/>
<text x="626" y="350.42" fill="#000000" font-family="'Liberation Serif'" font-size="9.5" text-anchor="end" stroke="#000000" stroke-width="0.2">6</text>
<text x="641.6" y="355.82" fill="#000000" font-family="'Liberation Serif'" font-size="9.5" text-anchor="start" stroke="#000000" stroke-width="0.2">PGND1</text>
<line x1="623.6" y1="362.5" x2="634.5" y2="362.5" stroke="#000000" stroke-width="1.2"/>
<text x="626" y="360.83" fill="#000000" font-family="'Liberation Serif'" font-size="9.5" text-anchor="end" stroke="#000000" stroke-width="0.2">7</text>
<text x="641.6" y="366.23" fill="#000000" font-family="'Liberation Serif'" font-size="9.5" text-anchor="start" stroke="#000000" stroke-width="0.2">PGND2</text>
<line x1="623.6" y1="373.5" x2="634.5" y2="373.5" stroke="#800000" stroke-width="1.2"/>
<text x="626" y="371.23" fill="#800000" font-family="'Liberation Serif'" font-size="9.5" text-anchor="end" stroke="#800000" stroke-width="0.2">8</text>
<text x="641.6" y="376.63" fill="#800000" font-family="'Liberation Serif'" font-size="9.5" text-anchor="start" stroke="#800000" stroke-width="0.2">OUT2</text>
<line x1="623.6" y1="383.5" x2="634.5" y2="383.5" stroke="#800000" stroke-width="1.2"/>
<text x="626" y="381.64" fill="#800000" font-family="'Liberation Serif'" font-size="9.5" text-anchor="end" stroke="#800000" stroke-width="0.2">9</text>
<text x="641.6" y="387.04" fill="#800000" font-family="'Liberation Serif'" font-size="9.5" text-anchor="start" stroke="#800000" stroke-width="0.2">OUT3</text>
<line x1="623.6" y1="394.5" x2="634.5" y2="394.5" stroke="#000000" stroke-width="1.2"/>
<text x="626" y="392.04" fill="#000000" font-family="'Liberation Serif'" font-size="9.5" text-anchor="end" stroke="#000000" stroke-width="0.2">10</text>
<text x="641.6" y="397.44" fill="#000000" font-family="'Liberation Serif'" font-size="9.5" text-anchor="start" stroke="#000000" stroke-width="0.2">PGND3</text>
<line x1="623.6" y1="404.5" x2="634.5" y2="404.5" stroke="#800000" stroke-width="1.2"/>
<text x="626" y="402.45" fill="#800000" font-family="'Liberation Serif'" font-size="9.5" text-anchor="end" stroke="#800000" stroke-width="0.2">11</text>
<text x="641.6" y="407.85" fill="#800000" font-family="'Liberation Serif'" font-size="9.5" text-anchor="start" stroke="#800000" stroke-width="0.2">VM</text>
<line x1="623.6" y1="414.5" x2="634.5" y2="414.5" stroke="#800000" stroke-width="1.2"/>
<text x="626" y="412.85" fill="#800000" font-family="'Liberation Serif'" font-size="9.5" text-anchor="end" stroke="#800000" stroke-width="0.2">12</text>
<text x="641.6" y="418.25" fill="#800000" font-family="'Liberation Serif'" font-size="9.5" text-anchor="start" stroke="#800000" stroke-width="0.2">COMPP</text>
<line x1="623.6" y1="425.5" x2="634.5" y2="425.5" stroke="#800000" stroke-width="1.2"/>
<text x="626" y="423.26" fill="#800000" font-family="'Liberation Serif'" font-size="9.5" text-anchor="end" stroke="#800000" stroke-width="0.2">13</text>
<text x="641.6" y="428.66" fill="#800000" font-family="'Liberation Serif'" font-size="9.5" text-anchor="start" stroke="#800000" stroke-width="0.2">COMPN</text>
<line x1="623.6" y1="435.5" x2="634.5" y2="435.5" stroke="#000000" stroke-width="1.2"/>
<text x="626" y="433.66" fill="#000000" font-family="'Liberation Serif'" font-size="9.5" text-anchor="end" stroke="#000000" stroke-width="0.2">14</text>
<text x="641.6" y="439.06" fill="#000000" font-family="'Liberation Serif'" font-size="9.5" text-anchor="start" stroke="#000000" stroke-width="0.2">GND</text>
<line x1="758.5" y1="290.5" x2="769" y2="290.5" stroke="#800000" stroke-width="1.2"/>
<text x="767.4" y="288.2" fill="#800000" font-family="'Liberation Serif'" font-size="9.5" text-anchor="start" stroke="#800000" stroke-width="0.2">29</text>
<text x="752" y="293.6" fill="#800000" font-family="'Liberation Serif'" font-size="9.5" text-anchor="end" stroke="#800000" stroke-width="0.2">EP</text>
<line x1="758.5" y1="300.5" x2="769" y2="300.5" stroke="#000000" stroke-width="1.2"/>
<text x="767.4" y="298.56" fill="#000000" font-family="'Liberation Serif'" font-size="9.5" text-anchor="start" stroke="#000000" stroke-width="0.2">28</text>
<text x="752" y="303.96" fill="#000000" font-family="'Liberation Serif'" font-size="9.5" text-anchor="end" stroke="#000000" stroke-width="0.2">GND</text>
<line x1="758.5" y1="310.5" x2="769" y2="310.5" stroke="#800000" stroke-width="1.2"/>
<text x="767.4" y="308.92" fill="#800000" font-family="'Liberation Serif'" font-size="9.5" text-anchor="start" stroke="#800000" stroke-width="0.2">27</text>
<text x="752" y="314.32" fill="#800000" font-family="'Liberation Serif'" font-size="9.5" text-anchor="end" stroke="#800000" stroke-width="0.2">IN1</text>
<line x1="758.5" y1="321.5" x2="769" y2="321.5" stroke="#800000" stroke-width="1.2"/>
<text x="767.4" y="319.28" fill="#800000" font-family="'Liberation Serif'" font-size="9.5" text-anchor="start" stroke="#800000" stroke-width="0.2">26</text>
<text x="752" y="324.68" fill="#800000" font-family="'Liberation Serif'" font-size="9.5" text-anchor="end" stroke="#800000" stroke-width="0.2">EN1</text>
<line x1="758.5" y1="331.5" x2="769" y2="331.5" stroke="#800000" stroke-width="1.2"/>
<text x="767.4" y="329.64" fill="#800000" font-family="'Liberation Serif'" font-size="9.5" text-anchor="start" stroke="#800000" stroke-width="0.2">25</text>
<text x="752" y="335.04" fill="#800000" font-family="'Liberation Serif'" font-size="9.5" text-anchor="end" stroke="#800000" stroke-width="0.2">IN2</text>
<line x1="758.5" y1="342.5" x2="769" y2="342.5" stroke="#800000" stroke-width="1.2"/>
<text x="767.4" y="340" fill="#800000" font-family="'Liberation Serif'" font-size="9.5" text-anchor="start" stroke="#800000" stroke-width="0.2">24</text>
<text x="752" y="345.4" fill="#800000" font-family="'Liberation Serif'" font-size="9.5" text-anchor="end" stroke="#800000" stroke-width="0.2">EN2</text>
<line x1="758.5" y1="352.5" x2="769" y2="352.5" stroke="#800000" stroke-width="1.2"/>
<text x="767.4" y="350.36" fill="#800000" font-family="'Liberation Serif'" font-size="9.5" text-anchor="start" stroke="#800000" stroke-width="0.2">23</text>
<text x="752" y="355.76" fill="#800000" font-family="'Liberation Serif'" font-size="9.5" text-anchor="end" stroke="#800000" stroke-width="0.2">IN3</text>
<line x1="758.5" y1="362.5" x2="769" y2="362.5" stroke="#800000" stroke-width="1.2"/>
<text x="767.4" y="360.72" fill="#800000" font-family="'Liberation Serif'" font-size="9.5" text-anchor="start" stroke="#800000" stroke-width="0.2">22</text>
<text x="752" y="366.12" fill="#800000" font-family="'Liberation Serif'" font-size="9.5" text-anchor="end" stroke="#800000" stroke-width="0.2">EN3</text>
<line x1="758.5" y1="373.5" x2="769" y2="373.5" stroke="#800000" stroke-width="1.2"/>
<text x="767.4" y="371.08" fill="#800000" font-family="'Liberation Serif'" font-size="9.5" text-anchor="start" stroke="#800000" stroke-width="0.2">21</text>
<text x="752" y="376.48" fill="#800000" font-family="'Liberation Serif'" font-size="9.5" text-anchor="end" stroke="#800000" stroke-width="0.2">NC</text>
<line x1="758.5" y1="383.5" x2="769" y2="383.5" stroke="#000000" stroke-width="1.2"/>
<text x="767.4" y="381.44" fill="#000000" font-family="'Liberation Serif'" font-size="9.5" text-anchor="start" stroke="#000000" stroke-width="0.2">20</text>
<text x="752" y="386.84" fill="#000000" font-family="'Liberation Serif'" font-size="9.5" text-anchor="end" stroke="#000000" stroke-width="0.2">GND</text>
<line x1="758.5" y1="393.5" x2="769" y2="393.5" stroke="#800000" stroke-width="1.2"/>
<text x="767.4" y="391.8" fill="#800000" font-family="'Liberation Serif'" font-size="9.5" text-anchor="start" stroke="#800000" stroke-width="0.2">19</text>
<text x="752" y="397.2" fill="#800000" font-family="'Liberation Serif'" font-size="9.5" text-anchor="end" stroke="#800000" stroke-width="0.2">COMPO#</text>
<line x1="758.5" y1="404.5" x2="769" y2="404.5" stroke="#800000" stroke-width="1.2"/>
<text x="767.4" y="402.16" fill="#800000" font-family="'Liberation Serif'" font-size="9.5" text-anchor="start" stroke="#800000" stroke-width="0.2">18</text>
<text x="752" y="407.56" fill="#800000" font-family="'Liberation Serif'" font-size="9.5" text-anchor="end" stroke="#800000" stroke-width="0.2">FAULT#</text>
<line x1="758.5" y1="414.5" x2="769" y2="414.5" stroke="#800000" stroke-width="1.2"/>
<text x="767.4" y="412.52" fill="#800000" font-family="'Liberation Serif'" font-size="9.5" text-anchor="start" stroke="#800000" stroke-width="0.2">17</text>
<text x="752" y="417.92" fill="#800000" font-family="'Liberation Serif'" font-size="9.5" text-anchor="end" stroke="#800000" stroke-width="0.2">SLEEP#</text>
<line x1="758.5" y1="424.5" x2="769" y2="424.5" stroke="#800000" stroke-width="1.2"/>
<text x="767.4" y="422.88" fill="#800000" font-family="'Liberation Serif'" font-size="9.5" text-anchor="start" stroke="#800000" stroke-width="0.2">16</text>
<text x="752" y="428.28" fill="#800000" font-family="'Liberation Serif'" font-size="9.5" text-anchor="end" stroke="#800000" stroke-width="0.2">RESET#</text>
<line x1="758.5" y1="435.5" x2="769" y2="435.5" stroke="#800000" stroke-width="1.2"/>
<text x="767.4" y="433.24" fill="#800000" font-family="'Liberation Serif'" font-size="9.5" text-anchor="start" stroke="#800000" stroke-width="0.2">15</text>
<text x="752" y="438.64" fill="#800000" font-family="'Liberation Serif'" font-size="9.5" text-anchor="end" stroke="#800000" stroke-width="0.2">V3P3OUT</text>
<polyline points="623.5,300.5 613.5,300.5 613.5,269.5 582.5,269.5 582.5,285.5" fill="none" stroke="#000088" stroke-width="1.2" stroke-linejoin="miter"/>
<polyline points="582.5,290.5 582.5,310.5 623.5,310.5" fill="none" stroke="#000088" stroke-width="1.2" stroke-linejoin="miter"/>
<line x1="576.8" y1="285.5" x2="588" y2="285.5" stroke="#0000ff" stroke-width="1.3"/>
<line x1="576.8" y1="290.5" x2="588" y2="290.5" stroke="#0000ff" stroke-width="1.3"/>
<text x="589" y="292.5" fill="#000080" font-family="'Liberation Serif'" font-size="9.5" text-anchor="start" stroke="#000080" stroke-width="0.2">C9</text>
<text x="589" y="303.4" fill="#000080" font-family="'Liberation Serif'" font-size="9.5" text-anchor="start" stroke="#000080" stroke-width="0.2">0.01uf</text>
<polyline points="623.5,321.5 572.5,321.5 572.5,300.5 540.5,300.5 540.5,316.5" fill="none" stroke="#000088" stroke-width="1.2" stroke-linejoin="miter"/>
<line x1="535.1" y1="316.5" x2="546.3" y2="316.5" stroke="#0000ff" stroke-width="1.3"/>
<line x1="535.1" y1="321.5" x2="546.3" y2="321.5" stroke="#0000ff" stroke-width="1.3"/>
<line x1="540.5" y1="321.5" x2="540.5" y2="331.9" stroke="#000088" stroke-width="1.2"/>
<text x="547.6" y="324" fill="#000080" font-family="'Liberation Serif'" font-size="9.5" text-anchor="start" stroke="#000080" stroke-width="0.2">C11</text>
<text x="547.6" y="334" fill="#000080" font-family="'Liberation Serif'" font-size="9.5" text-anchor="start" stroke="#000080" stroke-width="0.2">0.1uf</text>
<line x1="499.3" y1="331.5" x2="623.6" y2="331.5" stroke="#000088" stroke-width="1.2"/>
<line x1="510" y1="331.5" x2="515" y2="331.5" stroke="#fffcf7" stroke-width="3"/>
<line x1="510.5" y1="326.21" x2="510.5" y2="337.01" stroke="#0000ff" stroke-width="1.3"/>
<line x1="515.5" y1="326.21" x2="515.5" y2="337.01" stroke="#0000ff" stroke-width="1.3"/>
<circle cx="540.7" cy="331.61" r="2.6" fill="#000088"/>
<circle cx="499.3" cy="331.61" r="2.6" fill="#000088"/>
<line x1="540.5" y1="331.61" x2="540.5" y2="341.8" stroke="#800000" stroke-width="1.2"/>
<line x1="535.9" y1="341.5" x2="545.9" y2="341.5" stroke="#800000" stroke-width="1.3"/>
<text x="541" y="351.6" fill="#800000" font-family="'Liberation Serif'" font-size="9.5" text-anchor="middle" stroke="#800000" stroke-width="0.2">VCC</text>
<text x="509" y="324" fill="#000080" font-family="'Liberation Serif'" font-size="9.5" text-anchor="start" stroke="#000080" stroke-width="0.2">C10</text>
<text x="509" y="345.7" fill="#000080" font-family="'Liberation Serif'" font-size="9.5" text-anchor="start" stroke="#000080" stroke-width="0.2">0.1uf</text>
<line x1="489.4" y1="331.5" x2="499.3" y2="331.5" stroke="#800000" stroke-width="1.2"/>
<line x1="489.5" y1="321.11" x2="489.5" y2="342.11" stroke="#800000" stroke-width="1.2"/>
<line x1="486.5" y1="324.11" x2="486.5" y2="339.11" stroke="#800000" stroke-width="1.2"/>
<line x1="483.5" y1="327.31" x2="483.5" y2="335.91" stroke="#800000" stroke-width="1.2"/>
<line x1="480.5" y1="330.21" x2="480.5" y2="333.01" stroke="#800000" stroke-width="1.2"/>
<text x="476.6" y="334.9" fill="#800000" font-family="'Liberation Serif'" font-size="9.5" text-anchor="end" stroke="#800000" stroke-width="0.2">GND</text>
<line x1="613.6" y1="342.5" x2="623.6" y2="342.5" stroke="#000088" stroke-width="1.2"/>
<text x="613.6" y="339.8" fill="#800000" font-family="'Liberation Serif'" font-size="9.5" text-anchor="start" stroke="#800000" stroke-width="0.2">U</text>
<polyline points="499.5,331.5 499.5,362.5 623.5,362.5" fill="none" stroke="#000088" stroke-width="1.2" stroke-linejoin="miter"/>
<polyline points="623.5,352.5 603.5,352.5 603.5,394.5 623.5,394.5" fill="none" stroke="#000088" stroke-width="1.2" stroke-linejoin="miter"/>
<circle cx="603.4" cy="362.83" r="2.6" fill="#000088"/>
<line x1="613" y1="373.5" x2="623.6" y2="373.5" stroke="#000088" stroke-width="1.2"/>
<text x="613" y="371.73" fill="#800000" font-family="'Liberation Serif'" font-size="9.5" text-anchor="start" stroke="#800000" stroke-width="0.2">V</text>
<line x1="613" y1="383.5" x2="623.6" y2="383.5" stroke="#000088" stroke-width="1.2"/>
<text x="613" y="382.14" fill="#800000" font-family="'Liberation Serif'" font-size="9.5" text-anchor="start" stroke="#800000" stroke-width="0.2">W</text>
<line x1="530.4" y1="404.5" x2="623.6" y2="404.5" stroke="#000088" stroke-width="1.2"/>
<line x1="530.4" y1="404.5" x2="537" y2="404.5" stroke="#800000" stroke-width="1.2"/>
<line x1="530.5" y1="399.45" x2="530.5" y2="409.45" stroke="#800000" stroke-width="1.3"/>
<text x="528.1" y="408.5" fill="#800000" font-family="'Liberation Serif'" font-size="9.5" text-anchor="end" stroke="#800000" stroke-width="0.2">VCC</text>
<line x1="540.5" y1="404.45" x2="540.5" y2="414.8" stroke="#000088" stroke-width="1.2"/>
<line x1="535.5" y1="414.5" x2="545.9" y2="414.5" stroke="#0000ff" stroke-width="1.3"/>
<line x1="535.5" y1="420.5" x2="545.9" y2="420.5" stroke="#0000ff" stroke-width="1.3"/>
<line x1="540.5" y1="420.2" x2="540.5" y2="435.66" stroke="#000088" stroke-width="1.2"/>
<circle cx="540.7" cy="404.45" r="2.6" fill="#000088"/>
<circle cx="540.7" cy="435.66" r="2.6" fill="#000088"/>
<line x1="572.5" y1="404.45" x2="572.5" y2="414.8" stroke="#000088" stroke-width="1.2"/>
<line x1="566.9" y1="414.5" x2="577.3" y2="414.5" stroke="#0000ff" stroke-width="1.3"/>
<line x1="566.9" y1="420.5" x2="577.3" y2="420.5" stroke="#0000ff" stroke-width="1.3"/>
<line x1="572.5" y1="420.2" x2="572.5" y2="435.66" stroke="#000088" stroke-width="1.2"/>
<circle cx="572.1" cy="404.45" r="2.6" fill="#000088"/>
<circle cx="572.1" cy="435.66" r="2.6" fill="#000088"/>
<text x="547" y="421.5" fill="#000080" font-family="'Liberation Serif'" font-size="9.5" text-anchor="start" stroke="#000080" stroke-width="0.2">C13</text>
<text x="547.1" y="431.8" fill="#000080" font-family="'Liberation Serif'" font-size="9.5" text-anchor="start" stroke="#000080" stroke-width="0.2">0.1uf</text>
<text x="578.5" y="421.5" fill="#000080" font-family="'Liberation Serif'" font-size="9.5" text-anchor="start" stroke="#000080" stroke-width="0.2">C14</text>
<text x="578.5" y="431.8" fill="#000080" font-family="'Liberation Serif'" font-size="9.5" text-anchor="start" stroke="#000080" stroke-width="0.2">100uf</text>
<polyline points="623.5,414.5 603.5,414.5 603.5,435.5" fill="none" stroke="#000088" stroke-width="1.2" stroke-linejoin="miter"/>
<line x1="603.4" y1="425.5" x2="623.6" y2="425.5" stroke="#000088" stroke-width="1.2"/>
<line x1="530.4" y1="435.5" x2="623.6" y2="435.5" stroke="#000088" stroke-width="1.2"/>
<circle cx="603.4" cy="425.26" r="2.6" fill="#000088"/>
<circle cx="603.4" cy="435.66" r="2.6" fill="#000088"/>
<line x1="530.5" y1="435.66" x2="530.5" y2="445.4" stroke="#800000" stroke-width="1.2"/>
<line x1="519.4" y1="445.5" x2="541.4" y2="445.5" stroke="#800000" stroke-width="1.2"/>
<line x1="522.9" y1="448.5" x2="537.9" y2="448.5" stroke="#800000" stroke-width="1.2"/>
<line x1="526.4" y1="451.5" x2="534.4" y2="451.5" stroke="#800000" stroke-width="1.2"/>
<line x1="529.1" y1="454.5" x2="531.7" y2="454.5" stroke="#800000" stroke-width="1.2"/>
<text x="530.7" y="464.8" fill="#800000" font-family="'Liberation Serif'" font-size="9.5" text-anchor="middle" stroke="#800000" stroke-width="0.2">GND</text>
<polyline points="769.5,290.5 789.5,290.5 789.5,300.5 769.5,300.5" fill="none" stroke="#000088" stroke-width="1.2" stroke-linejoin="miter"/>
<circle cx="789.5" cy="290.2" r="2.6" fill="#000088"/>
<line x1="789.5" y1="290.5" x2="800.7" y2="290.5" stroke="#800000" stroke-width="1.2"/>
<line x1="800.5" y1="279.7" x2="800.5" y2="300.7" stroke="#800000" stroke-width="1.2"/>
<line x1="803.5" y1="282.7" x2="803.5" y2="297.7" stroke="#800000" stroke-width="1.2"/>
<line x1="806.5" y1="285.9" x2="806.5" y2="294.5" stroke="#800000" stroke-width="1.2"/>
<line x1="809.5" y1="288.8" x2="809.5" y2="291.6" stroke="#800000" stroke-width="1.2"/>
<text x="812.8" y="294.3" fill="#800000" font-family="'Liberation Serif'" font-size="9.5" text-anchor="start" stroke="#800000" stroke-width="0.2">GND</text>
<line x1="769" y1="310.5" x2="811" y2="310.5" stroke="#000088" stroke-width="1.2"/>
<text x="779.2" y="309.12" fill="#800000" font-family="'Liberation Serif'" font-size="9.5" text-anchor="start" stroke="#800000" stroke-width="0.2">PWM1</text>
<line x1="769" y1="331.5" x2="811" y2="331.5" stroke="#000088" stroke-width="1.2"/>
<text x="779.2" y="329.84" fill="#800000" font-family="'Liberation Serif'" font-size="9.5" text-anchor="start" stroke="#800000" stroke-width="0.2">PWM2</text>
<line x1="769" y1="352.5" x2="811" y2="352.5" stroke="#000088" stroke-width="1.2"/>
<text x="779.2" y="350.56" fill="#800000" font-family="'Liberation Serif'" font-size="9.5" text-anchor="start" stroke="#800000" stroke-width="0.2">PWM3</text>
<polyline points="769.5,321.5 820.5,321.5 820.5,362.5 769.5,362.5" fill="none" stroke="#000088" stroke-width="1.2" stroke-linejoin="miter"/>
<line x1="769" y1="342.5" x2="841.8" y2="342.5" stroke="#000088" stroke-width="1.2"/>
<circle cx="820.7" cy="342" r="2.6" fill="#000088"/>
<text x="829.6" y="340" fill="#800000" font-family="'Liberation Serif'" font-size="9.5" text-anchor="start" stroke="#800000" stroke-width="0.2">EN</text>
<polyline points="769.5,373.5 789.5,373.5 789.5,393.5 769.5,393.5" fill="none" stroke="#000088" stroke-width="1.2" stroke-linejoin="miter"/>
<line x1="769" y1="383.5" x2="789.5" y2="383.5" stroke="#000088" stroke-width="1.2"/>
<circle cx="789.5" cy="383.44" r="2.6" fill="#000088"/>
<line x1="789.5" y1="383.5" x2="800.7" y2="383.5" stroke="#800000" stroke-width="1.2"/>
<line x1="800.5" y1="372.94" x2="800.5" y2="393.94" stroke="#800000" stroke-width="1.2"/>
<line x1="803.5" y1="375.94" x2="803.5" y2="390.94" stroke="#800000" stroke-width="1.2"/>
<line x1="806.5" y1="379.14" x2="806.5" y2="387.74" stroke="#800000" stroke-width="1.2"/>
<line x1="809.5" y1="382.04" x2="809.5" y2="384.84" stroke="#800000" stroke-width="1.2"/>
<text x="812.8" y="387" fill="#800000" font-family="'Liberation Serif'" font-size="9.5" text-anchor="start" stroke="#800000" stroke-width="0.2">GND</text>
<path d="M765,400h1v1h-1zM766,401h1v1h-1zM773,400h1v1h-1zM772,401h1v1h-1zM765,408h1v1h-1zM766,407h1v1h-1zM773,408h1v1h-1zM772,407h1v1h-1zM768,403h1v1h-1zM769,404h1v1h-1zM770,405h1v1h-1zM768,405h1v1h-1zM770,403h1v1h-1z" fill="#ff0000" shape-rendering="crispEdges"/>
<polyline points="769.5,414.5 789.5,414.5 789.5,435.5 769.5,435.5" fill="none" stroke="#000088" stroke-width="1.2" stroke-linejoin="miter"/>
<line x1="769" y1="424.5" x2="789.5" y2="424.5" stroke="#000088" stroke-width="1.2"/>
<circle cx="789.5" cy="424.88" r="2.6" fill="#000088"/>
<line x1="789.5" y1="424.5" x2="800.7" y2="424.5" stroke="#000000" stroke-width="1"/>
<line x1="800.5" y1="419.28" x2="800.5" y2="430.48" stroke="#0000ff" stroke-width="1.3"/>
<line x1="805.5" y1="419.28" x2="805.5" y2="430.48" stroke="#0000ff" stroke-width="1.3"/>
<line x1="805.3" y1="424.5" x2="816.5" y2="424.5" stroke="#000000" stroke-width="1"/>
<line x1="816.5" y1="424.5" x2="826.8" y2="424.5" stroke="#800000" stroke-width="1.2"/>
<line x1="826.5" y1="414.38" x2="826.5" y2="435.38" stroke="#800000" stroke-width="1.2"/>
<line x1="829.5" y1="417.38" x2="829.5" y2="432.38" stroke="#800000" stroke-width="1.2"/>
<line x1="832.5" y1="420.58" x2="832.5" y2="429.18" stroke="#800000" stroke-width="1.2"/>
<line x1="835.5" y1="423.48" x2="835.5" y2="426.28" stroke="#800000" stroke-width="1.2"/>
<text x="839" y="428.1" fill="#800000" font-family="'Liberation Serif'" font-size="9.5" text-anchor="start" stroke="#800000" stroke-width="0.2">GND</text>
<text x="799.4" y="417" fill="#000080" font-family="'Liberation Serif'" font-size="9.5" text-anchor="start" stroke="#000080" stroke-width="0.2">C12</text>
<text x="799.4" y="440.3" fill="#000080" font-family="'Liberation Serif'" font-size="9.5" text-anchor="start" stroke="#000080" stroke-width="0.2">0.47uf</text>
<rect x="862.3" y="337.3" width="41.5" height="20.4" stroke="#800000" stroke-width="1.3" fill="#ffffb0" rx="0"/>
<line x1="872.5" y1="357.7" x2="872.5" y2="372.8" stroke="#000000" stroke-width="1"/>
<line x1="872.5" y1="372.8" x2="872.5" y2="393.5" stroke="#000088" stroke-width="1.2"/>
<text x="875.5" y="348.4" fill="#000000" font-family="'Liberation Serif'" font-size="9.5" text-anchor="middle" stroke="#000000" stroke-width="0.2" transform="rotate(-90 875.5 348.4)">1</text>
<line x1="883.5" y1="357.7" x2="883.5" y2="372.8" stroke="#000000" stroke-width="1"/>
<line x1="883.5" y1="372.8" x2="883.5" y2="393.5" stroke="#000088" stroke-width="1.2"/>
<text x="886.6" y="348.4" fill="#000000" font-family="'Liberation Serif'" font-size="9.5" text-anchor="middle" stroke="#000000" stroke-width="0.2" transform="rotate(-90 886.6 348.4)">2</text>
<line x1="893.5" y1="357.7" x2="893.5" y2="372.8" stroke="#000000" stroke-width="1"/>
<line x1="893.5" y1="372.8" x2="893.5" y2="393.5" stroke="#000088" stroke-width="1.2"/>
<text x="896.6" y="348.4" fill="#000000" font-family="'Liberation Serif'" font-size="9.5" text-anchor="middle" stroke="#000000" stroke-width="0.2" transform="rotate(-90 896.6 348.4)">3</text>
<text x="863" y="383.7" fill="#000080" font-family="'Liberation Serif'" font-size="9.5" text-anchor="start" stroke="#000080" stroke-width="0.2">JP1</text>
<text x="870.5" y="393.5" fill="#800000" font-family="'Liberation Serif'" font-size="9.5" text-anchor="start" stroke="#800000" stroke-width="0.2" transform="rotate(-90 870.5 393.5)">W</text>
<text x="881.5" y="393.5" fill="#800000" font-family="'Liberation Serif'" font-size="9.5" text-anchor="start" stroke="#800000" stroke-width="0.2" transform="rotate(-90 881.5 393.5)">V</text>
<text x="891.5" y="393.5" fill="#800000" font-family="'Liberation Serif'" font-size="9.5" text-anchor="start" stroke="#800000" stroke-width="0.2" transform="rotate(-90 891.5 393.5)">U</text>
<line x1="779.5" y1="653.5" x2="964" y2="653.5" stroke="#000000" stroke-width="1.1"/>
<line x1="779.5" y1="653.3" x2="779.5" y2="722" stroke="#000000" stroke-width="1.1"/>
<line x1="779.5" y1="684.5" x2="964" y2="684.5" stroke="#000000" stroke-width="1.1"/>
<line x1="831.5" y1="684.7" x2="831.5" y2="715.3" stroke="#000000" stroke-width="1.1"/>
<line x1="779.5" y1="715.5" x2="964" y2="715.5" stroke="#000000" stroke-width="1.1"/>
<text x="785" y="662.5" fill="#000000" font-family="'Liberation Serif'" font-size="9.5" text-anchor="start" stroke="#000000" stroke-width="0.2">Title</text>
<text x="785" y="693" fill="#000000" font-family="'Liberation Serif'" font-size="9.5" text-anchor="start" stroke="#000000" stroke-width="0.2">Size</text>
<text x="790" y="708.5" fill="#000000" font-family="'Liberation Serif'" font-size="9.5" text-anchor="start" stroke="#000000" stroke-width="0.2">A4</text>
<text x="836.5" y="693" fill="#000000" font-family="'Liberation Serif'" font-size="9.5" text-anchor="start" stroke="#000000" stroke-width="0.2">Number</text>
<text x="785" y="724" fill="#000000" font-family="'Liberation Serif'" font-size="9.5" text-anchor="start" stroke="#000000" stroke-width="0.2">Date:</text>
<text x="831.5" y="724" fill="#000000" font-family="'Liberation Serif'" font-size="9.5" text-anchor="start" stroke="#000000" stroke-width="0.2">8/16/2022</text>
</svg></body></html>
